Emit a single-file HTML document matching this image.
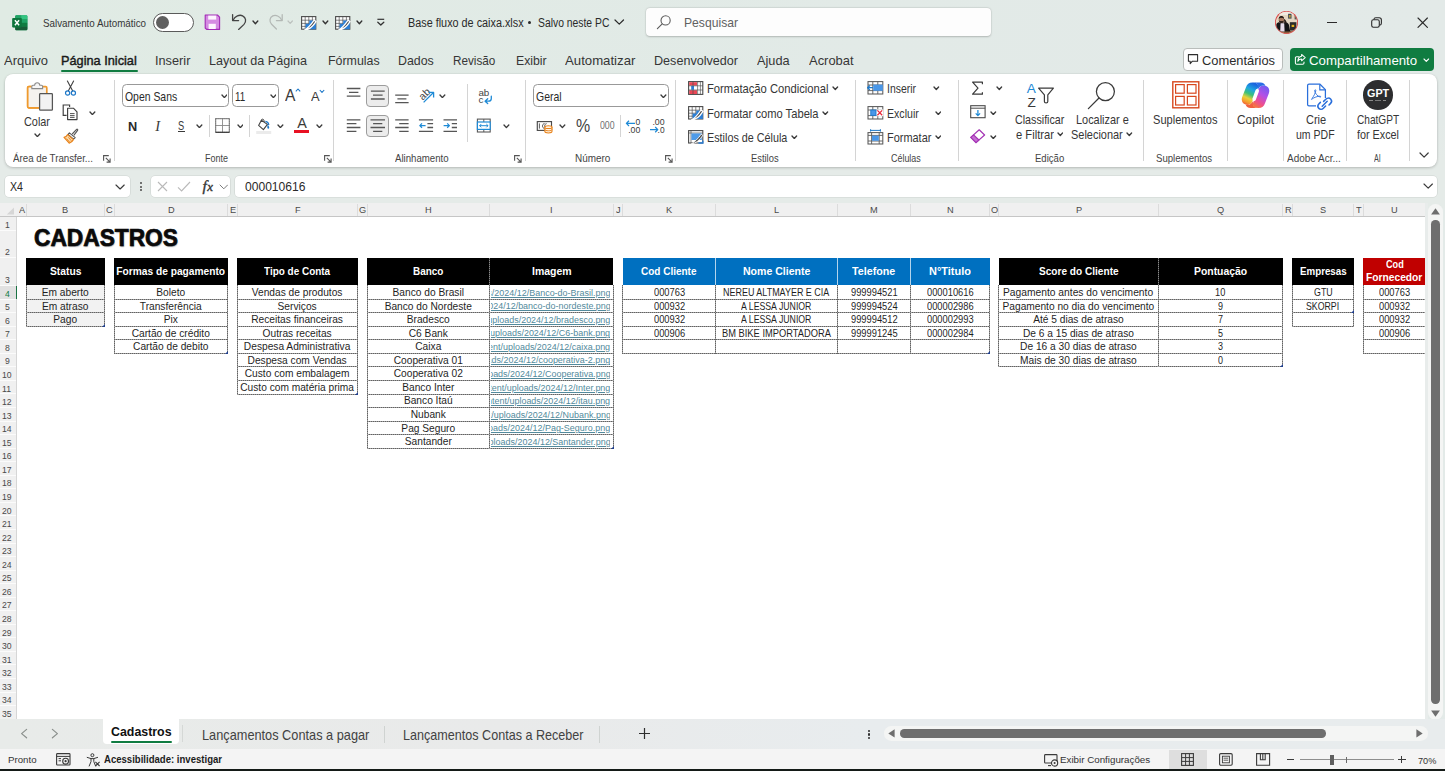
<!DOCTYPE html>
<html lang="pt-BR"><head><meta charset="utf-8"><title>Base fluxo de caixa.xlsx - Excel</title>
<style>
html,body{margin:0;padding:0;}
body{width:1445px;height:771px;overflow:hidden;position:relative;font-family:"Liberation Sans",sans-serif;
background:linear-gradient(90deg,#e0ebe4 0%,#e2eae7 60%,#e3eae8 100%);}
.t{position:absolute;white-space:nowrap;transform-origin:0 50%;display:block;}
.r{position:absolute;display:block;}
.lk{overflow:hidden;white-space:nowrap;direction:rtl;text-align:right;font-size:9.7px;line-height:12.4px;color:#528a9c;}
.lk span{direction:ltr;unicode-bidi:embed;text-decoration:underline;text-decoration-thickness:0.9px;text-underline-offset:1.2px;display:inline-block;transform:scaleX(0.925);transform-origin:100% 50%;}
</style></head><body>
<div class="r" style="left:0.00px;top:120.00px;width:1445.00px;height:90.00px;background:linear-gradient(180deg,rgba(229,235,232,0) 0%,rgba(229,235,232,1) 45%);"></div>
<svg class="r" style="left:11.60px;top:14.60px;" width="17" height="16" viewBox="0 0 17 16">
<rect x="3.2" y="0.2" width="12.2" height="15" rx="1.3" fill="#21a366"/>
<path d="M3.2 1.5 C3.2 0.8 3.8 0.2 4.5 0.2 H9.3 V4 H3.2 Z" fill="#21a366"/>
<path d="M9.3 0.2 H14.1 C14.8 0.2 15.4 0.8 15.4 1.5 V4 H9.3 Z" fill="#33c481"/>
<rect x="3.2" y="4" width="6.1" height="3.8" fill="#107c41"/>
<rect x="9.3" y="4" width="6.1" height="3.8" fill="#21a366"/>
<rect x="3.2" y="7.8" width="6.1" height="3.8" fill="#185c37"/>
<rect x="9.3" y="7.8" width="6.1" height="3.8" fill="#107c41"/>
<path d="M3.2 11.6 H15.4 V13.9 C15.4 14.6 14.8 15.2 14.1 15.2 H4.5 C3.8 15.2 3.2 14.6 3.2 13.9 Z" fill="#185c37"/>
<rect x="0.2" y="2.9" width="9.6" height="9.6" rx="1.2" fill="#107c41"/>
<rect x="0.2" y="2.9" width="9.6" height="9.6" rx="1.2" fill="#0b6a37" opacity="0.35"/>
<path d="M2.9 5.2 L7.1 10.2 M7.1 5.2 L2.9 10.2" stroke="#fff" stroke-width="1.45" fill="none"/>
</svg>
<span class="t" style="left:43.00px;top:18.19px;font-size:11.00px;line-height:11.00px;color:#363636;transform:scaleX(0.8913);">Salvamento Automático</span>
<div class="r" style="left:152.90px;top:12.80px;width:41.00px;height:18.90px;background:#fff;border:1.3px solid #5a5a5a;border-radius:10px;box-sizing:border-box;"></div>
<div class="r" style="left:156.20px;top:15.80px;width:13.20px;height:13.20px;background:#5f5f5f;border-radius:50%;"></div>
<svg class="r" style="left:204.40px;top:14.40px;" width="17" height="17" viewBox="0 0 17 17">
<path d="M1.2 1 H13.4 L15.6 3.2 V15.4 H2.6 L1.2 14 Z" fill="#d58be2" stroke="#a12bb5" stroke-width="1.1" stroke-linejoin="round"/>
<rect x="4.2" y="1.6" width="8" height="4" fill="#fdf4fe"/>
<rect x="4.6" y="9.8" width="7.2" height="5.2" fill="#fdf4fe"/>
</svg>
<svg class="r" style="left:230.60px;top:13.40px;" width="18" height="18" viewBox="0 0 18 18">
<path d="M1.6 1.6 V7.6 H7.6" fill="none" stroke="#444" stroke-width="1.3" stroke-linecap="round" stroke-linejoin="round"/>
<path d="M2 7.2 C4.2 3.2 8.4 1.2 11.6 2.8 C15 4.5 15.6 8.6 13 11.4 L7.6 16.4" fill="none" stroke="#444" stroke-width="1.3" stroke-linecap="round"/>
</svg>
<svg class="r" style="left:251.90px;top:20.05px;" width="6.8" height="4.7" viewBox="0 0 6.8 4.7"><path d="M1 1 L3.4 3.7 L5.8 1" fill="none" stroke="#333" stroke-width="1.35" stroke-linecap="round" stroke-linejoin="round"/></svg>
<svg class="r" style="left:267.00px;top:13.40px;" width="17" height="18" viewBox="0 0 17 18">
<path d="M15.2 1.6 V7.6 H9.4" fill="none" stroke="#b3b8b5" stroke-width="1.25" stroke-linecap="round" stroke-linejoin="round"/>
<path d="M14.8 7.2 C12.8 3.2 8.8 1.4 5.8 2.9 C2.6 4.5 2 8.6 4.6 11.2 L9.4 16" fill="none" stroke="#b3b8b5" stroke-width="1.25" stroke-linecap="round"/>
</svg>
<svg class="r" style="left:287.40px;top:20.20px;" width="6.4" height="4.4" viewBox="0 0 6.4 4.4"><path d="M1 1 L3.2 3.4 L5.4 1" fill="none" stroke="#bcc1be" stroke-width="1.2" stroke-linecap="round" stroke-linejoin="round"/></svg>
<svg class="r" style="left:300.60px;top:16.00px;" width="16" height="14.4" viewBox="0 0 16 14.4">
<rect x="0.6" y="0.6" width="14.2" height="12.6" fill="#fff" stroke="#4a4a4a" stroke-width="1.1"/>
<path d="M0.6 4.2 H14.8 M0.6 7.4 H14.8 M0.6 10.4 H14.8 M4.2 0.6 V13.2 M7.8 0.6 V13.2 M11.4 0.6 V13.2" stroke="#4a4a4a" stroke-width="0.8" fill="none" opacity="0.85"/>
<path d="M4.6 13.2 V7.8 H8.2 V4.6 H14.8 V13.2 Z" fill="#2b7fd6"/>
<path d="M3.4 14 C5.6 13.2 10.2 8.4 13.2 4.2 L15 5.6 C12.2 9.8 7.8 14 3.4 14Z" fill="#4a4a4a" stroke="#fff" stroke-width="1.3"/>
</svg>
<svg class="r" style="left:321.90px;top:20.05px;" width="6.8" height="4.7" viewBox="0 0 6.8 4.7"><path d="M1 1 L3.4 3.7 L5.8 1" fill="none" stroke="#333" stroke-width="1.35" stroke-linecap="round" stroke-linejoin="round"/></svg>
<svg class="r" style="left:335.20px;top:16.00px;" width="16" height="14.4" viewBox="0 0 16 14.4">
<rect x="0.6" y="0.6" width="14.2" height="12.6" fill="#fff" stroke="#4a4a4a" stroke-width="1.1"/>
<path d="M0.6 4.2 H14.8 M0.6 7.4 H14.8 M0.6 10.4 H14.8 M4.2 0.6 V13.2 M7.8 0.6 V13.2 M11.4 0.6 V13.2" stroke="#4a4a4a" stroke-width="0.8" fill="none" opacity="0.85"/>
<path d="M4.6 13.2 V7.8 H8.2 V4.6 H14.8 V13.2 Z" fill="#2b7fd6"/>
<path d="M3.4 14 C5.6 13.2 10.2 8.4 13.2 4.2 L15 5.6 C12.2 9.8 7.8 14 3.4 14Z" fill="#4a4a4a" stroke="#fff" stroke-width="1.3"/>
</svg>
<svg class="r" style="left:356.40px;top:20.05px;" width="6.8" height="4.7" viewBox="0 0 6.8 4.7"><path d="M1 1 L3.4 3.7 L5.8 1" fill="none" stroke="#333" stroke-width="1.35" stroke-linecap="round" stroke-linejoin="round"/></svg>
<svg class="r" style="left:375.60px;top:18.20px;" width="10" height="9" viewBox="0 0 10 9"><path d="M1.4 1.3 H8.2" stroke="#333" stroke-width="1.2" fill="none"/><path d="M1.8 4.2 L4.8 7 L7.8 4.2" stroke="#333" stroke-width="1.3" fill="none" stroke-linejoin="round" stroke-linecap="round"/></svg>
<span class="t" style="left:407.60px;top:17.34px;font-size:12.00px;line-height:12.00px;color:#2a2a2a;transform:scaleX(0.9027);">Base fluxo de caixa.xlsx</span>
<div class="r" style="left:528.40px;top:21.00px;width:3.00px;height:3.00px;background:#2a2a2a;border-radius:50%;"></div>
<span class="t" style="left:538.20px;top:17.34px;font-size:12.00px;line-height:12.00px;color:#2a2a2a;transform:scaleX(0.8633);">Salvo neste PC</span>
<svg class="r" style="left:614.25px;top:19.10px;" width="10.5" height="6.2" viewBox="0 0 10.5 6.2"><path d="M1 1 L5.25 5.2 L9.5 1" fill="none" stroke="#2a2a2a" stroke-width="1.2" stroke-linecap="round" stroke-linejoin="round"/></svg>
<div class="r" style="left:646.00px;top:8.00px;width:345.00px;height:28.00px;background:#fdfdfd;border-radius:4px;box-shadow:0 0.5px 2px rgba(0,0,0,0.20), 0 0 0 0.5px rgba(0,0,0,0.05);"></div>
<svg class="r" style="left:656.00px;top:14.00px;" width="16" height="16" viewBox="0 0 16 16"><circle cx="9.6" cy="6.4" r="4.6" fill="none" stroke="#5c5c5c" stroke-width="1.1"/><path d="M6.2 9.8 L1.4 14.6" stroke="#5c5c5c" stroke-width="1.15" stroke-linecap="round"/></svg>
<span class="t" style="left:684.00px;top:16.07px;font-size:13.50px;line-height:13.50px;color:#616161;transform:scaleX(0.8996);">Pesquisar</span>
<svg class="r" style="left:1274px;top:10px" width="26" height="26" viewBox="0 0 26 26">
<defs><clipPath id="av"><circle cx="12.5" cy="12.45" r="10.7"/></clipPath></defs>
<circle cx="12.5" cy="12.45" r="11.5" fill="#dc3a3a"/>
<g clip-path="url(#av)">
<rect x="0" y="0" width="26" height="26" fill="#e4d6c2"/>
<rect x="0" y="0" width="26" height="5" fill="#f1eadf"/>
<rect x="14.1" y="3.8" width="3.4" height="4.8" fill="#3d4852"/>
<rect x="14.9" y="5" width="1.8" height="2.6" fill="#b99a3a"/>
<rect x="20.6" y="5.4" width="2.6" height="4" fill="#5a5a52"/>
<rect x="15.8" y="12.2" width="6.6" height="8.4" fill="#2b2b29"/>
<rect x="17.6" y="14.8" width="2.6" height="2.2" fill="#e2b21e"/>
<rect x="0" y="21" width="26" height="5" fill="#8a5a3a"/>
<path d="M1.6 21.4 L2.4 14.2 C3 12.8 4.6 12.2 6 12.4 L10.4 12.4 C12.4 12.2 14 13 14.8 14.4 L16.2 21.4 Z" fill="#141416"/>
<path d="M6.6 13.2 L10.2 13.2 L10.6 21.4 L6.2 21.4 Z" fill="#e7dcea"/>
<path d="M9.8 9 C11 9 12.6 11 12.8 13.4 L10.6 13.6Z" fill="#2a1e1a"/>
<ellipse cx="7.4" cy="9.6" rx="2.7" ry="3.5" fill="#a87a60"/>
<path d="M4.7 9 C4.7 5 10.1 5 10.1 9 C9 7.4 5.8 7.4 4.7 9Z" fill="#17110f"/>
<path d="M4.8 10.2 C5.2 14 9.6 14 10 10.2 C9 11.4 5.8 11.4 4.8 10.2Z" fill="#33241e"/>
</g></svg>
<div class="r" style="left:1327.30px;top:21.70px;width:9.40px;height:1.15px;background:#2b2b2b;"></div>
<svg class="r" style="left:1371.40px;top:16.80px;" width="11.4" height="11.4" viewBox="0 0 11.4 11.4"><rect x="0.7" y="2.7" width="7.6" height="7.6" rx="1.7" fill="none" stroke="#2b2b2b" stroke-width="1.1"/><path d="M2.8 2.5 C3 1.3 3.7 0.7 4.8 0.7 H8.2 C9.6 0.7 10.4 1.5 10.4 2.9 V6.2 C10.4 7.3 9.8 8 8.6 8.2" fill="none" stroke="#2b2b2b" stroke-width="1.1"/></svg>
<svg class="r" style="left:1417.20px;top:17.00px;" width="12" height="12" viewBox="0 0 12 12"><path d="M1 1 L10.4 10.4 M10.4 1 L1 10.4" stroke="#2b2b2b" stroke-width="1.15" fill="none" stroke-linecap="round"/></svg>
<span class="t" style="left:4.00px;top:54.29px;font-size:13.60px;line-height:13.60px;color:#363636;transform:scaleX(0.9542);">Arquivo</span>
<span class="t" style="left:61.00px;top:54.29px;font-size:13.60px;line-height:13.60px;color:#1a1a1a;transform:scaleX(0.9370);-webkit-text-stroke:0.45px #1a1a1a;">Página Inicial</span>
<div class="r" style="left:60.60px;top:69.50px;width:77.00px;height:2.00px;background:#107c41;border-radius:1px;"></div>
<span class="t" style="left:154.60px;top:54.29px;font-size:13.60px;line-height:13.60px;color:#363636;transform:scaleX(0.9369);">Inserir</span>
<span class="t" style="left:209.20px;top:54.29px;font-size:13.60px;line-height:13.60px;color:#363636;transform:scaleX(0.9267);">Layout da Página</span>
<span class="t" style="left:327.60px;top:54.29px;font-size:13.60px;line-height:13.60px;color:#363636;transform:scaleX(0.9122);">Fórmulas</span>
<span class="t" style="left:398.00px;top:54.29px;font-size:13.60px;line-height:13.60px;color:#363636;transform:scaleX(0.9107);">Dados</span>
<span class="t" style="left:452.80px;top:54.29px;font-size:13.60px;line-height:13.60px;color:#363636;transform:scaleX(0.8630);">Revisão</span>
<span class="t" style="left:515.50px;top:54.29px;font-size:13.60px;line-height:13.60px;color:#363636;transform:scaleX(0.9028);">Exibir</span>
<span class="t" style="left:564.60px;top:54.29px;font-size:13.60px;line-height:13.60px;color:#363636;transform:scaleX(0.9703);">Automatizar</span>
<span class="t" style="left:654.40px;top:54.29px;font-size:13.60px;line-height:13.60px;color:#363636;transform:scaleX(0.9260);">Desenvolvedor</span>
<span class="t" style="left:757.40px;top:54.29px;font-size:13.60px;line-height:13.60px;color:#363636;transform:scaleX(0.9373);">Ajuda</span>
<span class="t" style="left:808.80px;top:54.29px;font-size:13.60px;line-height:13.60px;color:#363636;transform:scaleX(0.9516);">Acrobat</span>
<div class="r" style="left:1183.00px;top:48.00px;width:99.50px;height:23.00px;background:#fdfdfd;border:1px solid #b9bdbb;border-radius:4px;box-sizing:border-box;"></div>
<svg class="r" style="left:1186.60px;top:53.40px;" width="13" height="13" viewBox="0 0 13 13"><path d="M1.4 1.6 H10.6 V8.2 H5.4 L3.2 10.6 V8.2 H1.4 Z" fill="none" stroke="#2b2b2b" stroke-width="1.05" stroke-linejoin="round"/></svg>
<span class="t" style="left:1202.40px;top:54.29px;font-size:13.60px;line-height:13.60px;color:#2a2a2a;transform:scaleX(0.9469);">Comentários</span>
<div class="r" style="left:1289.80px;top:48.00px;width:144.50px;height:23.00px;background:#107c41;border-radius:4px;"></div>
<svg class="r" style="left:1294.00px;top:53.00px;" width="13" height="13" viewBox="0 0 13 13"><path d="M4.6 3.8 H2.6 C1.9 3.8 1.4 4.3 1.4 5 V10 C1.4 10.7 1.9 11.2 2.6 11.2 H8.8 C9.5 11.2 10 10.7 10 10 V9" fill="none" stroke="#fff" stroke-width="1.05" stroke-linecap="round"/><path d="M7.6 1.4 L11.2 4.6 L7.6 7.8 V6 C5.8 6 4.6 6.6 3.8 8.2 C4 5.4 5.4 3.6 7.6 3.3 Z" fill="none" stroke="#fff" stroke-width="1.05" stroke-linejoin="round"/></svg>
<span class="t" style="left:1309.40px;top:54.29px;font-size:13.60px;line-height:13.60px;color:#ffffff;transform:scaleX(0.9738);">Compartilhamento</span>
<svg class="r" style="left:1423.30px;top:58.10px;" width="6.6" height="4.4" viewBox="0 0 6.6 4.4"><path d="M1 1 L3.3 3.4 L5.6 1" fill="none" stroke="#fff" stroke-width="1.1" stroke-linecap="round" stroke-linejoin="round"/></svg>
<div class="r" style="left:4.60px;top:74.00px;width:1432.80px;height:93.00px;background:#ffffff;border-radius:8px;box-shadow:0 1px 3px rgba(0,0,0,0.20),0 0 0 0.5px rgba(0,0,0,0.04);"></div>
<svg class="r" style="left:26.00px;top:80.50px;" width="28" height="31" viewBox="0 0 28 31">
<path d="M5.6 5.6 H2.9 C2.2 5.6 1.7 6.1 1.7 6.8 V25.6 C1.7 26.3 2.2 26.8 2.9 26.8 H13.4" fill="#f6f1ea" stroke="#ef9a2e" stroke-width="1.7"/>
<path d="M2 6 H20.4 V12 H13.4 V26.6 H2Z" fill="#f5f2ee"/>
<path d="M5.6 5.6 H2.9 C2.2 5.6 1.7 6.1 1.7 6.8 V25.6 C1.7 26.3 2.2 26.8 2.9 26.8 H13.4 M16.6 5.6 H19.6 C20.3 5.6 20.8 6.1 20.8 6.8 V12.2" fill="none" stroke="#ef9a2e" stroke-width="1.7"/>
<path d="M5.8 7.6 V5.4 C5.8 4.7 6.3 4.2 7 4.2 H8.6 C8.8 2.7 9.9 1.8 11.2 1.8 C12.5 1.8 13.6 2.7 13.8 4.2 H15.4 C16.1 4.2 16.6 4.7 16.6 5.4 V7.6 Z" fill="#f6f6f6" stroke="#8a8a8a" stroke-width="1.1"/>
<rect x="13.6" y="12.6" width="12.8" height="16.6" rx="0.8" fill="#f3f3f3" stroke="#555" stroke-width="1.25"/>
</svg>
<span class="t" style="left:24.20px;top:115.80px;font-size:12.40px;line-height:12.40px;color:#363636;transform:scaleX(0.8775);">Colar</span>
<svg class="r" style="left:33.90px;top:132.90px;" width="6.8" height="4.6" viewBox="0 0 6.8 4.6"><path d="M1 1 L3.4 3.6 L5.8 1" fill="none" stroke="#3b3b3b" stroke-width="1.35" stroke-linecap="round" stroke-linejoin="round"/></svg>
<svg class="r" style="left:64.00px;top:80.00px;" width="13" height="17" viewBox="0 0 13 17">
<path d="M3.4 1 L8.6 10.8 M9.6 1 L4.4 10.8" stroke="#3f3f3f" stroke-width="1.1" fill="none" stroke-linecap="round"/>
<circle cx="3.6" cy="13" r="2.1" fill="none" stroke="#1e78c8" stroke-width="1.2"/>
<circle cx="9.4" cy="13" r="2.1" fill="none" stroke="#1e78c8" stroke-width="1.2"/>
</svg>
<svg class="r" style="left:62.20px;top:103.80px;" width="17" height="17" viewBox="0 0 17 17">
<path d="M4.6 11.4 H1.2 V1 H7.6 V3" fill="none" stroke="#3f3f3f" stroke-width="1.15"/>
<path d="M5.6 4.2 H11.4 L15 7.8 V15.6 H5.6 Z" fill="#fff" stroke="#3f3f3f" stroke-width="1.15" stroke-linejoin="round"/>
<path d="M8 9.6 H12.6 M8 11.6 H12.6 M8 13.4 H12.6" stroke="#3f3f3f" stroke-width="0.9" fill="none"/>
</svg>
<svg class="r" style="left:88.90px;top:110.50px;" width="6.8" height="4.6" viewBox="0 0 6.8 4.6"><path d="M1 1 L3.4 3.6 L5.8 1" fill="none" stroke="#3b3b3b" stroke-width="1.35" stroke-linecap="round" stroke-linejoin="round"/></svg>
<svg class="r" style="left:62.50px;top:128.00px;" width="16" height="16" viewBox="0 0 16 16">
<path d="M9.2 6 L13.6 1.4 C14.2 0.8 15.2 1.6 14.6 2.4 L10.8 7.4" fill="#fff" stroke="#555" stroke-width="1.1"/>
<path d="M6.4 4.8 L12.2 9.6 L10.6 11.2 L5 6.4 Z" fill="#fff" stroke="#555" stroke-width="1.05" stroke-linejoin="round"/>
<path d="M4.6 6.6 L10.4 11.6 C9.4 13.4 8 14.6 6.2 15.2 L1 9.4 C2.6 9 3.8 8 4.6 6.6 Z" fill="#fbd9a8" stroke="#e8831c" stroke-width="1.15" stroke-linejoin="round"/>
<path d="M3.6 10.6 L6.6 14 M5.4 9.4 L8.4 12.8" stroke="#e8831c" stroke-width="0.9" fill="none"/>
</svg>
<span class="t" style="left:13.00px;top:153.13px;font-size:10.60px;line-height:10.60px;color:#444444;transform:scaleX(0.9175);">Área de Transfer...</span>
<svg class="r" style="left:103.30px;top:154.60px;" width="9" height="9" viewBox="0 0 9 9"><path d="M0.6 5.8 V0.6 H5.8" fill="none" stroke="#555" stroke-width="1.1"/><path d="M2.8 2.8 L6.8 6.8 M7.1 3.6 V7.1 H3.6" fill="none" stroke="#555" stroke-width="1.1"/></svg>
<div class="r" style="left:113.80px;top:80.00px;width:1.00px;height:81.00px;background:#d4d4d4;"></div>
<div class="r" style="left:122.30px;top:84.10px;width:107.20px;height:22.70px;background:#fff;border:1px solid #999;border-radius:4.5px;box-sizing:border-box;"></div>
<span class="t" style="left:124.80px;top:90.97px;font-size:12.20px;line-height:12.20px;color:#2a2a2a;transform:scaleX(0.8552);">Open Sans</span>
<svg class="r" style="left:220.60px;top:93.90px;" width="6.8" height="4.6" viewBox="0 0 6.8 4.6"><path d="M1 1 L3.4 3.6 L5.8 1" fill="none" stroke="#3b3b3b" stroke-width="1.35" stroke-linecap="round" stroke-linejoin="round"/></svg>
<div class="r" style="left:231.70px;top:84.10px;width:47.20px;height:22.70px;background:#fff;border:1px solid #999;border-radius:4.5px;box-sizing:border-box;"></div>
<span class="t" style="left:234.60px;top:90.97px;font-size:12.20px;line-height:12.20px;color:#2a2a2a;transform:scaleX(0.8055);">11</span>
<svg class="r" style="left:269.60px;top:93.90px;" width="6.8" height="4.6" viewBox="0 0 6.8 4.6"><path d="M1 1 L3.4 3.6 L5.8 1" fill="none" stroke="#3b3b3b" stroke-width="1.35" stroke-linecap="round" stroke-linejoin="round"/></svg>
<span class="t" style="left:285.40px;top:86.82px;font-size:16.40px;line-height:16.40px;color:#3a3a3a;transform:scaleX(0.9507);">A</span>
<svg class="r" style="left:295.20px;top:87.60px;" width="6" height="4.4" viewBox="0 0 6 4.4"><path d="M0.8 3.4 L3 1 L5.2 3.4" fill="none" stroke="#1e78c8" stroke-width="1.1" stroke-linejoin="round"/></svg>
<span class="t" style="left:310.80px;top:89.53px;font-size:13.20px;line-height:13.20px;color:#3a3a3a;transform:scaleX(0.9767);">A</span>
<svg class="r" style="left:318.60px;top:88.60px;" width="6" height="4.4" viewBox="0 0 6 4.4"><path d="M0.8 1 L3 3.4 L5.2 1" fill="none" stroke="#1e78c8" stroke-width="1.1" stroke-linejoin="round"/></svg>
<span class="t" style="left:128.40px;top:120.09px;font-size:13.60px;line-height:13.60px;color:#2a2a2a;font-weight:700;transform:scaleX(0.9367);">N</span>
<span class="t" style="left:155.20px;top:119.03px;font-size:14.50px;line-height:14.50px;color:#3a3a3a;font-style:italic;font-family:'Liberation Serif',serif;">I</span>
<span class="t" style="left:178.40px;top:119.66px;font-size:12.80px;line-height:12.80px;color:#3a3a3a;transform:scaleX(0.7262);">S</span>
<div class="r" style="left:177.60px;top:130.90px;width:7.80px;height:1.10px;background:#3a3a3a;"></div>
<svg class="r" style="left:195.90px;top:123.90px;" width="6.8" height="4.6" viewBox="0 0 6.8 4.6"><path d="M1 1 L3.4 3.6 L5.8 1" fill="none" stroke="#3b3b3b" stroke-width="1.35" stroke-linecap="round" stroke-linejoin="round"/></svg>
<div class="r" style="left:208.80px;top:115.00px;width:1.00px;height:22.00px;background:#d4d4d4;"></div>
<svg class="r" style="left:215.00px;top:118.00px;" width="15" height="15" viewBox="0 0 15 15">
<rect x="0.6" y="0.6" width="13.8" height="13.8" fill="none" stroke="#8a8a8a" stroke-width="0.9" stroke-dasharray="1.1 0.9"/>
<path d="M7.5 0.4 V14.6 M0.4 7.5 H14.6" stroke="#8a8a8a" stroke-width="0.9" fill="none"/>
<path d="M0.4 14.3 H14.6" stroke="#3a3a3a" stroke-width="1.3"/>
<path d="M0.7 0.4 V14.6 M14.3 0.4 V14.6 M0.4 0.7 H14.6" stroke="#6f6f6f" stroke-width="0.9" fill="none"/>
</svg>
<svg class="r" style="left:236.70px;top:123.90px;" width="6.8" height="4.6" viewBox="0 0 6.8 4.6"><path d="M1 1 L3.4 3.6 L5.8 1" fill="none" stroke="#3b3b3b" stroke-width="1.35" stroke-linecap="round" stroke-linejoin="round"/></svg>
<div class="r" style="left:249.30px;top:115.00px;width:1.00px;height:22.00px;background:#d4d4d4;"></div>
<svg class="r" style="left:256.00px;top:117.50px;" width="16" height="17" viewBox="0 0 16 17">
<path d="M5.4 2.2 L2.6 7.4 L7.4 11.6 L11.4 6.4 Z" fill="#fff" stroke="#444" stroke-width="1.1" stroke-linejoin="round"/>
<path d="M5.2 2.4 C5.6 0.6 7.8 0.8 8 2.6 L8.2 4" fill="none" stroke="#444" stroke-width="1.0"/>
<path d="M11.6 6.4 C12.8 8 13.4 9 13.2 10 C13 11 11.6 11 11.4 10 C11.2 9 11.4 8 11.6 6.4Z" fill="#1e78c8"/>
<path d="M9.4 3.4 C11.4 3.6 12.6 4.8 12.8 7" fill="none" stroke="#1e78c8" stroke-width="1.2"/>
<rect x="0.2" y="13" width="15" height="3" fill="#ebebeb"/>
</svg>
<svg class="r" style="left:277.20px;top:123.90px;" width="6.8" height="4.6" viewBox="0 0 6.8 4.6"><path d="M1 1 L3.4 3.6 L5.8 1" fill="none" stroke="#3b3b3b" stroke-width="1.35" stroke-linecap="round" stroke-linejoin="round"/></svg>
<span class="t" style="left:297.20px;top:116.11px;font-size:14.40px;line-height:14.40px;color:#3a3a3a;">A</span>
<div class="r" style="left:294.00px;top:130.20px;width:14.80px;height:3.00px;background:#e81123;"></div>
<svg class="r" style="left:316.00px;top:123.90px;" width="6.8" height="4.6" viewBox="0 0 6.8 4.6"><path d="M1 1 L3.4 3.6 L5.8 1" fill="none" stroke="#3b3b3b" stroke-width="1.35" stroke-linecap="round" stroke-linejoin="round"/></svg>
<span class="t" style="left:204.80px;top:153.13px;font-size:10.60px;line-height:10.60px;color:#444444;transform:scaleX(0.8486);">Fonte</span>
<svg class="r" style="left:323.70px;top:154.60px;" width="9" height="9" viewBox="0 0 9 9"><path d="M0.6 5.8 V0.6 H5.8" fill="none" stroke="#555" stroke-width="1.1"/><path d="M2.8 2.8 L6.8 6.8 M7.1 3.6 V7.1 H3.6" fill="none" stroke="#555" stroke-width="1.1"/></svg>
<div class="r" style="left:333.40px;top:80.00px;width:1.00px;height:81.00px;background:#d4d4d4;"></div>
<div class="r" style="left:366.30px;top:84.60px;width:22.60px;height:22.10px;background:#ececec;border:1px solid #9c9c9c;border-radius:4px;box-sizing:border-box;"></div>
<div class="r" style="left:366.30px;top:114.80px;width:22.60px;height:22.10px;background:#ececec;border:1px solid #9c9c9c;border-radius:4px;box-sizing:border-box;"></div>
<svg class="r" style="left:340px;top:78px" width="190" height="67" viewBox="340 78 190 67"><path d="M346.8 88.5 H360.4 M349 92.4 H358.4 M346.8 96.2 H360.4 M370.9 91.1 H384.7 M373 95.1 H382.6 M370.9 99 H384.7 M395.2 95.1 H408.6 M397.4 98.9 H406.4 M395.2 102.7 H408.6 M346.8 119.8 H360.4 M346.8 123.6 H356.4 M346.8 127.5 H360.4 M346.8 131.3 H356.4 M370.5 119.8 H385 M373.1 123.6 H382.3 M370.5 127.5 H385 M373.1 131.3 H382.3 M395.2 119.8 H408.6 M399.2 123.6 H408.6 M395.2 127.5 H408.6 M399.2 131.3 H408.6 M418.9 119.8 H433.1 M427.4 123.6 H433.1 M427.4 127.5 H433.1 M418.9 131.3 H433.1 M443.5 119.8 H457 M451.8 123.6 H457 M451.8 127.5 H457 M443.5 131.3 H457 " stroke="#565656" stroke-width="1.3" fill="none"/><path d="M425.6 125.6 H419.8 M422 123.4 L419.8 125.6 L422 127.8 M443.6 125.6 H449.4 M447.2 123.4 L449.4 125.6 L447.2 127.8" stroke="#1e8ad6" stroke-width="1.25" fill="none" stroke-linejoin="round"/><text transform="translate(424.2 94.2) rotate(-45)" x="-5.6" y="3.6" font-family="Liberation Sans" font-size="10.4" fill="#444">ab</text><path d="M423.6 102.4 L433.2 92.8 M428.4 92.4 H433.6 V97.6" fill="none" stroke="#1e8ad6" stroke-width="1.3" stroke-linejoin="round"/><text x="478.4" y="95.9" font-family="Liberation Sans" font-size="9.8" fill="#444">ab</text><text x="478.6" y="103.1" font-family="Liberation Sans" font-size="9.8" fill="#444">c</text><path d="M491.3 96.2 V98.4 C491.3 100.4 490.3 101.2 488.6 101.2 H485.2 M487.7 98.8 L485.1 101.2 L487.7 103.6" fill="none" stroke="#1e8ad6" stroke-width="1.3" stroke-linejoin="round" stroke-linecap="round"/><rect x="477.4" y="119.1" width="12.8" height="12.9" fill="#fff" stroke="#5a5a5a" stroke-width="1.1"/><path d="M483.8 119.1 V122 M483.8 129.2 V132" stroke="#5a5a5a" stroke-width="1"/><rect x="477.4" y="122" width="12.8" height="7.4" fill="#fff" stroke="#1e8ad6" stroke-width="1.2"/><path d="M479.6 125.7 H488 M481.2 124.1 L479.6 125.7 L481.2 127.3 M486.4 124.1 L488 125.7 L486.4 127.3" stroke="#1e8ad6" stroke-width="1" fill="none"/></svg>
<svg class="r" style="left:438.80px;top:93.90px;" width="6.8" height="4.6" viewBox="0 0 6.8 4.6"><path d="M1 1 L3.4 3.6 L5.8 1" fill="none" stroke="#3b3b3b" stroke-width="1.35" stroke-linecap="round" stroke-linejoin="round"/></svg>
<div class="r" style="left:466.80px;top:84.00px;width:1.00px;height:58.40px;background:#d4d4d4;"></div>
<svg class="r" style="left:502.90px;top:124.10px;" width="6.8" height="4.6" viewBox="0 0 6.8 4.6"><path d="M1 1 L3.4 3.6 L5.8 1" fill="none" stroke="#3b3b3b" stroke-width="1.35" stroke-linecap="round" stroke-linejoin="round"/></svg>
<span class="t" style="left:394.80px;top:153.13px;font-size:10.60px;line-height:10.60px;color:#444444;transform:scaleX(0.9097);">Alinhamento</span>
<svg class="r" style="left:514.10px;top:154.60px;" width="9" height="9" viewBox="0 0 9 9"><path d="M0.6 5.8 V0.6 H5.8" fill="none" stroke="#555" stroke-width="1.1"/><path d="M2.8 2.8 L6.8 6.8 M7.1 3.6 V7.1 H3.6" fill="none" stroke="#555" stroke-width="1.1"/></svg>
<div class="r" style="left:524.90px;top:80.00px;width:1.00px;height:81.00px;background:#d4d4d4;"></div>
<div class="r" style="left:533.20px;top:84.10px;width:135.40px;height:22.70px;background:#fff;border:1px solid #999;border-radius:4.5px;box-sizing:border-box;"></div>
<span class="t" style="left:535.80px;top:90.97px;font-size:12.20px;line-height:12.20px;color:#2a2a2a;transform:scaleX(0.8582);">Geral</span>
<svg class="r" style="left:659.90px;top:93.90px;" width="6.8" height="4.6" viewBox="0 0 6.8 4.6"><path d="M1 1 L3.4 3.6 L5.8 1" fill="none" stroke="#3b3b3b" stroke-width="1.35" stroke-linecap="round" stroke-linejoin="round"/></svg>
<svg class="r" style="left:530px;top:114px" width="145" height="26" viewBox="530 114 145 26"><rect x="537.3" y="121.6" width="14.2" height="8.8" fill="#fff" stroke="#4a4a4a" stroke-width="1.15"/><path d="M539.4 123.4 V128.6" stroke="#4a4a4a" stroke-width="0.9"/><path d="M544.6 123.6 C541.8 123.6 541.8 128.4 544.6 128.4 M546.6 123.6 C544 124 544 128 546.6 128.4" stroke="#4a4a4a" stroke-width="0.9" fill="none"/><path d="M544.8 127.2 V131.6 C544.8 133.4 552 133.4 552 131.6 V127.2" fill="#fff3e4" stroke="#e8831c" stroke-width="1.05"/><ellipse cx="548.4" cy="127.2" rx="3.6" ry="1.4" fill="#fff3e4" stroke="#e8831c" stroke-width="1.05"/><path d="M544.8 129.5 C544.8 131.2 552 131.2 552 129.5" fill="none" stroke="#e8831c" stroke-width="1"/><path d="M635 123.4 H626.4 M629 120.8 L626.4 123.4 L629 126" stroke="#1e8ad6" stroke-width="1.25" fill="none" stroke-linejoin="round"/><text x="635.4" y="125.1" font-family="Liberation Sans" font-size="8.6" fill="#3a3a3a">0</text><text x="628.2" y="132.7" font-family="Liberation Sans" font-size="8.6" fill="#3a3a3a" textLength="12.2" lengthAdjust="spacingAndGlyphs">.00</text><text x="652.4" y="124.9" font-family="Liberation Sans" font-size="8.6" fill="#3a3a3a" textLength="12.2" lengthAdjust="spacingAndGlyphs">.00</text><path d="M650 129.6 H657.8 M655.2 127 L657.8 129.6 L655.2 132.2" stroke="#1e8ad6" stroke-width="1.25" fill="none" stroke-linejoin="round"/><text x="657.6" y="132.7" font-family="Liberation Sans" font-size="8.6" fill="#3a3a3a" textLength="7" lengthAdjust="spacingAndGlyphs">.0</text></svg>
<svg class="r" style="left:559.00px;top:124.10px;" width="6.8" height="4.6" viewBox="0 0 6.8 4.6"><path d="M1 1 L3.4 3.6 L5.8 1" fill="none" stroke="#3b3b3b" stroke-width="1.35" stroke-linecap="round" stroke-linejoin="round"/></svg>
<span class="t" style="left:576.00px;top:117.39px;font-size:18.20px;line-height:18.20px;color:#444;transform:scaleX(0.8774);">%</span>
<span class="t" style="left:599.80px;top:120.60px;font-size:10.40px;line-height:10.40px;color:#707070;transform:scaleX(0.8415);">000</span>
<div class="r" style="left:619.70px;top:115.00px;width:1.00px;height:22.00px;background:#d4d4d4;"></div>
<span class="t" style="left:575.00px;top:153.13px;font-size:10.60px;line-height:10.60px;color:#444444;transform:scaleX(0.9390);">Número</span>
<svg class="r" style="left:664.70px;top:154.60px;" width="9" height="9" viewBox="0 0 9 9"><path d="M0.6 5.8 V0.6 H5.8" fill="none" stroke="#555" stroke-width="1.1"/><path d="M2.8 2.8 L6.8 6.8 M7.1 3.6 V7.1 H3.6" fill="none" stroke="#555" stroke-width="1.1"/></svg>
<div class="r" style="left:674.70px;top:80.00px;width:1.00px;height:81.00px;background:#d4d4d4;"></div>
<svg class="r" style="left:687.60px;top:81.40px;" width="16" height="14.4" viewBox="0 0 16 14.4">
<rect x="0.6" y="0.6" width="14.2" height="12.8" fill="#fff" stroke="#4a4a4a" stroke-width="1.1"/>
<rect x="1.2" y="1.2" width="7.8" height="3.4" fill="#ea4755"/>
<rect x="3.2" y="5" width="2.8" height="3.8" fill="#2b7fd6"/>
<rect x="1.2" y="9.2" width="7.8" height="3.8" fill="#ea4755"/>
<path d="M0.6 4.8 H14.8 M0.6 9 H14.8 M5 0.6 V4.8 M5 9 V13.4 M9.6 0.6 V13.4 M12.4 0.6 V13.4" stroke="#4a4a4a" stroke-width="0.8" fill="none" opacity="0.8"/>
</svg>
<span class="t" style="left:706.80px;top:83.20px;font-size:12.40px;line-height:12.40px;color:#363636;transform:scaleX(0.9048);">Formatação Condicional</span>
<svg class="r" style="left:832.20px;top:86.15px;" width="6.6" height="4.5" viewBox="0 0 6.6 4.5"><path d="M1 1 L3.3 3.5 L5.6 1" fill="none" stroke="#3b3b3b" stroke-width="1.35" stroke-linecap="round" stroke-linejoin="round"/></svg>
<svg class="r" style="left:687.60px;top:105.80px;" width="16" height="15" viewBox="0 0 16 15">
<rect x="0.6" y="0.6" width="14.2" height="12.4" fill="#fff" stroke="#4a4a4a" stroke-width="1.1"/>
<path d="M0.6 4.2 H14.8 M0.6 7.2 H14.8 M0.6 10.2 H14.8 M4.2 0.6 V13 M7.8 0.6 V13 M11.4 0.6 V13" stroke="#4a4a4a" stroke-width="0.8" fill="none" opacity="0.85"/>
<path d="M4.6 13 V7.6 H8.2 V4.6 H14.8 V13 Z" fill="#2b7fd6"/>
<path d="M3.2 14 C5.4 13.2 10 8.4 13 4 L15 5.4 C12.2 9.8 7.6 14 3.2 14Z" fill="#4a4a4a" stroke="#fff" stroke-width="1.3"/>
</svg>
<span class="t" style="left:706.80px;top:107.60px;font-size:12.40px;line-height:12.40px;color:#363636;transform:scaleX(0.9014);">Formatar como Tabela</span>
<svg class="r" style="left:822.20px;top:110.55px;" width="6.6" height="4.5" viewBox="0 0 6.6 4.5"><path d="M1 1 L3.3 3.5 L5.6 1" fill="none" stroke="#3b3b3b" stroke-width="1.35" stroke-linecap="round" stroke-linejoin="round"/></svg>
<svg class="r" style="left:687.60px;top:130.20px;" width="16" height="15" viewBox="0 0 16 15">
<rect x="0.6" y="0.6" width="14.2" height="12.4" fill="#fff" stroke="#4a4a4a" stroke-width="1.1"/>
<path d="M0.6 3 H14.8 M3 0.6 V13" stroke="#4a4a4a" stroke-width="0.8" fill="none" opacity="0.85"/>
<rect x="3.4" y="3.4" width="10.4" height="6.6" fill="#4f9be8"/>
<path d="M3.4 13.8 C5.6 13 10.2 8.4 13.2 4.2 L14.8 5.4 C12 9.6 7.6 13.8 3.4 13.8Z" fill="#4a4a4a" stroke="#fff" stroke-width="0.9"/>
<path d="M14.8 10.4 V13 H10.4" fill="none" stroke="#2b7fd6" stroke-width="1.4"/>
</svg>
<span class="t" style="left:706.80px;top:132.00px;font-size:12.40px;line-height:12.40px;color:#363636;transform:scaleX(0.8706);">Estilos de Célula</span>
<svg class="r" style="left:791.10px;top:134.95px;" width="6.6" height="4.5" viewBox="0 0 6.6 4.5"><path d="M1 1 L3.3 3.5 L5.6 1" fill="none" stroke="#3b3b3b" stroke-width="1.35" stroke-linecap="round" stroke-linejoin="round"/></svg>
<span class="t" style="left:751.40px;top:153.13px;font-size:10.60px;line-height:10.60px;color:#444444;transform:scaleX(0.8840);">Estilos</span>
<div class="r" style="left:855.10px;top:80.00px;width:1.00px;height:81.00px;background:#d4d4d4;"></div>
<svg class="r" style="left:866.60px;top:81.40px;" width="17" height="14" viewBox="0 0 17 14">
<rect x="1" y="0.6" width="14.8" height="12.4" fill="#fff" stroke="#5a5a5a" stroke-width="1.05"/>
<path d="M1 4 H15.8 M1 9.6 H15.8 M5.8 0.6 V13 M10.8 0.6 V13" stroke="#5a5a5a" stroke-width="0.9" fill="none"/>
<rect x="6.2" y="3.6" width="9.6" height="6.2" fill="#4a97e8"/>
<path d="M0.6 6.7 H6 M2.8 4.5 L0.6 6.7 L2.8 8.9" stroke="#1e78c8" stroke-width="1.25" fill="none" stroke-linejoin="round"/>
</svg>
<span class="t" style="left:886.80px;top:83.20px;font-size:12.40px;line-height:12.40px;color:#363636;transform:scaleX(0.8418);">Inserir</span>
<svg class="r" style="left:933.30px;top:86.15px;" width="6.6" height="4.5" viewBox="0 0 6.6 4.5"><path d="M1 1 L3.3 3.5 L5.6 1" fill="none" stroke="#3b3b3b" stroke-width="1.35" stroke-linecap="round" stroke-linejoin="round"/></svg>
<svg class="r" style="left:866.60px;top:105.80px;" width="17" height="14" viewBox="0 0 17 14">
<rect x="1" y="0.6" width="14.8" height="12.4" fill="#fff" stroke="#5a5a5a" stroke-width="1.05"/>
<path d="M1 4 H15.8 M1 9.6 H15.8 M5.8 0.6 V13 M10.8 0.6 V13" stroke="#5a5a5a" stroke-width="0.9" fill="none"/>
<rect x="9.4" y="3.4" width="7" height="6.8" fill="#fff"/>
<rect x="3.8" y="4" width="5.2" height="5.4" fill="#4a97e8" stroke="#1e78c8" stroke-width="0.9"/>
<path d="M10.4 4.4 L15.2 9.2 M15.2 4.4 L10.4 9.2" stroke="#e8283a" stroke-width="1.25" fill="none"/>
</svg>
<span class="t" style="left:886.80px;top:107.60px;font-size:12.40px;line-height:12.40px;color:#363636;transform:scaleX(0.8547);">Excluir</span>
<svg class="r" style="left:934.70px;top:110.55px;" width="6.6" height="4.5" viewBox="0 0 6.6 4.5"><path d="M1 1 L3.3 3.5 L5.6 1" fill="none" stroke="#3b3b3b" stroke-width="1.35" stroke-linecap="round" stroke-linejoin="round"/></svg>
<svg class="r" style="left:866.60px;top:128.80px;" width="17" height="16" viewBox="0 0 17 16">
<path d="M3.6 1.4 H13.4 M3.6 0.2 V2.6 M13.4 0.2 V2.6" stroke="#1e78c8" stroke-width="1" fill="none"/>
<rect x="1" y="3.6" width="14.8" height="11.4" fill="#fff" stroke="#5a5a5a" stroke-width="1.05"/>
<path d="M1 6.4 H15.8 M1 12 H15.8 M4.6 3.6 V15 M12.2 3.6 V15" stroke="#5a5a5a" stroke-width="0.9" fill="none"/>
<rect x="5" y="6.6" width="6.8" height="5.2" fill="#4a97e8"/>
</svg>
<span class="t" style="left:886.80px;top:132.00px;font-size:12.40px;line-height:12.40px;color:#363636;transform:scaleX(0.8828);">Formatar</span>
<svg class="r" style="left:934.50px;top:134.95px;" width="6.6" height="4.5" viewBox="0 0 6.6 4.5"><path d="M1 1 L3.3 3.5 L5.6 1" fill="none" stroke="#3b3b3b" stroke-width="1.35" stroke-linecap="round" stroke-linejoin="round"/></svg>
<span class="t" style="left:891.20px;top:153.13px;font-size:10.60px;line-height:10.60px;color:#444444;transform:scaleX(0.8430);">Células</span>
<div class="r" style="left:957.70px;top:80.00px;width:1.00px;height:81.00px;background:#d4d4d4;"></div>
<svg class="r" style="left:970.80px;top:80.80px;" width="13" height="15" viewBox="0 0 13 15"><path d="M11.4 3.2 V1.2 H1.6 L7 7.2 L1.6 13.2 H11.4 V11.2" fill="none" stroke="#3a3a3a" stroke-width="1.2" stroke-linejoin="round"/></svg>
<svg class="r" style="left:996.10px;top:86.15px;" width="6.6" height="4.5" viewBox="0 0 6.6 4.5"><path d="M1 1 L3.3 3.5 L5.6 1" fill="none" stroke="#3b3b3b" stroke-width="1.35" stroke-linecap="round" stroke-linejoin="round"/></svg>
<svg class="r" style="left:969.60px;top:105.40px;" width="16.5" height="14" viewBox="0 0 16.5 14">
<rect x="0.7" y="0.7" width="14.4" height="12" fill="#fff" stroke="#4a4a4a" stroke-width="1.1"/>
<path d="M0.7 3.2 H15.1" stroke="#4a4a4a" stroke-width="1"/>
<path d="M7.9 5 V10.6 M5.7 8.4 L7.9 10.6 L10.1 8.4" stroke="#1e8ad6" stroke-width="1.25" fill="none" stroke-linejoin="round"/>
</svg>
<svg class="r" style="left:990.10px;top:110.55px;" width="6.6" height="4.5" viewBox="0 0 6.6 4.5"><path d="M1 1 L3.3 3.5 L5.6 1" fill="none" stroke="#3b3b3b" stroke-width="1.35" stroke-linecap="round" stroke-linejoin="round"/></svg>
<svg class="r" style="left:969.80px;top:129.40px;" width="16" height="15" viewBox="0 0 16 15">
<path d="M9.2 0.8 L14.6 6 L6 13.6 L0.8 8.4 Z" fill="#fff" stroke="#a434b4" stroke-width="1.2" stroke-linejoin="round"/>
<path d="M3.6 5.8 L8.9 11 L6 13.6 L0.8 8.4 Z" fill="#c46cd2" stroke="#a434b4" stroke-width="1.1" stroke-linejoin="round"/>
</svg>
<svg class="r" style="left:990.10px;top:134.95px;" width="6.6" height="4.5" viewBox="0 0 6.6 4.5"><path d="M1 1 L3.3 3.5 L5.6 1" fill="none" stroke="#3b3b3b" stroke-width="1.35" stroke-linecap="round" stroke-linejoin="round"/></svg>
<svg class="r" style="left:1025.50px;top:81.50px;" width="30" height="28" viewBox="0 0 30 28">
<text x="0.8" y="11.4" font-family="Liberation Sans" font-size="13.6" fill="#1e8ad6">A</text>
<text x="1.4" y="24.9" font-family="Liberation Sans" font-size="13.6" fill="#3a3a3a">Z</text>
<path d="M12.6 6.2 H27.4 L21.8 12.8 V19.4 C21.8 21.4 18.4 21.4 18.4 19.4 V12.8 Z" fill="#fff" stroke="#3a3a3a" stroke-width="1.2" stroke-linejoin="round"/>
</svg>
<span class="t" style="left:1015.40px;top:114.40px;font-size:12.40px;line-height:12.40px;color:#363636;transform:scaleX(0.8639);">Classificar</span>
<span class="t" style="left:1016.00px;top:129.00px;font-size:12.40px;line-height:12.40px;color:#363636;transform:scaleX(0.9043);">e Filtrar</span>
<svg class="r" style="left:1056.90px;top:132.15px;" width="6.6" height="4.5" viewBox="0 0 6.6 4.5"><path d="M1 1 L3.3 3.5 L5.6 1" fill="none" stroke="#3b3b3b" stroke-width="1.35" stroke-linecap="round" stroke-linejoin="round"/></svg>
<svg class="r" style="left:1087.00px;top:81.00px;" width="30" height="30" viewBox="0 0 30 30"><circle cx="18.4" cy="10.6" r="9" fill="none" stroke="#3a3a3a" stroke-width="1.25"/><path d="M12 17 L1.4 27.6" stroke="#3a3a3a" stroke-width="1.3" stroke-linecap="round"/></svg>
<span class="t" style="left:1076.00px;top:114.40px;font-size:12.40px;line-height:12.40px;color:#363636;transform:scaleX(0.8806);">Localizar e</span>
<span class="t" style="left:1071.40px;top:129.00px;font-size:12.40px;line-height:12.40px;color:#363636;transform:scaleX(0.8841);">Selecionar</span>
<svg class="r" style="left:1126.10px;top:132.15px;" width="6.6" height="4.5" viewBox="0 0 6.6 4.5"><path d="M1 1 L3.3 3.5 L5.6 1" fill="none" stroke="#3b3b3b" stroke-width="1.35" stroke-linecap="round" stroke-linejoin="round"/></svg>
<span class="t" style="left:1035.40px;top:153.13px;font-size:10.60px;line-height:10.60px;color:#444444;transform:scaleX(0.9010);">Edição</span>
<div class="r" style="left:1142.50px;top:80.00px;width:1.00px;height:81.00px;background:#d4d4d4;"></div>
<svg class="r" style="left:1171.50px;top:80.90px;" width="28" height="28" viewBox="0 0 28 28">
<rect x="0.8" y="0.8" width="26" height="26" fill="#fff" stroke="#d8481e" stroke-width="1.4"/>
<rect x="3.6" y="3.6" width="8.6" height="8.6" fill="none" stroke="#d8481e" stroke-width="1.2"/>
<rect x="15.4" y="3.6" width="8.6" height="8.6" fill="none" stroke="#d8481e" stroke-width="1.2"/>
<rect x="3.6" y="15.4" width="8.6" height="8.6" fill="none" stroke="#d8481e" stroke-width="1.2"/>
<rect x="15.4" y="15.4" width="8.6" height="8.6" fill="none" stroke="#d8481e" stroke-width="1.2"/>
</svg>
<span class="t" style="left:1153.40px;top:114.40px;font-size:12.40px;line-height:12.40px;color:#363636;transform:scaleX(0.8926);">Suplementos</span>
<span class="t" style="left:1156.40px;top:153.13px;font-size:10.60px;line-height:10.60px;color:#444444;transform:scaleX(0.9084);">Suplementos</span>
<div class="r" style="left:1227.30px;top:80.00px;width:1.00px;height:81.00px;background:#d4d4d4;"></div>
<svg class="r" style="left:1241px;top:81.6px" width="29" height="26.4" viewBox="0 0 29 26.4">
<defs>
<linearGradient id="cpA" x1="0.6" y1="0" x2="0.25" y2="1"><stop offset="0" stop-color="#1a62de"/><stop offset="0.28" stop-color="#1fa6e0"/><stop offset="0.5" stop-color="#3cc07a"/><stop offset="0.7" stop-color="#e8d23a"/><stop offset="0.88" stop-color="#f59a2e"/><stop offset="1" stop-color="#ee5a3a"/></linearGradient>
<linearGradient id="cpB" x1="0.75" y1="0" x2="0.25" y2="1"><stop offset="0" stop-color="#6f5cf2"/><stop offset="0.4" stop-color="#b450e6"/><stop offset="0.75" stop-color="#ee4f8e"/><stop offset="1" stop-color="#f5763c"/></linearGradient>
</defs>
<path d="M17.4 26 C21.2 26 23 24.2 24 21.2 L27.8 11.4 C29.2 7.4 27.4 4.4 23.6 3.6 C20.4 3 18.4 4.6 17.4 7.6 L12 21 C11 24 13.4 26 17.4 26 Z" fill="url(#cpB)"/>
<path d="M11.6 0.4 C7.8 0.4 6 2.2 5 5.2 L1.2 15 C-0.2 19 1.6 22 5.4 22.8 C8.6 23.4 10.6 21.8 11.6 18.8 L17 5.4 C18 2.4 15.6 0.4 11.6 0.4 Z" fill="url(#cpA)"/>
<path d="M11.6 0.4 H19.4 C22.2 0.4 23.8 1.8 24.4 4 C21.6 3 18.6 3.8 17.4 7.2 L17 5.4 C17.6 2.6 15.4 0.4 11.6 0.4Z" fill="#2a6ee6"/>
<path d="M17.4 26 H9.6 C6.8 26 5.2 24.6 4.6 22.4 C7.4 23.4 10.4 22.6 11.6 19.2 L12 21 C11.4 23.8 13.6 26 17.4 26Z" fill="#f0603e"/>
<path d="M16.6 9.4 L13.6 17.2 C13.2 18.2 12.4 17.6 12.8 16.6 L15.6 9 C16 8 17 8.4 16.6 9.4Z" fill="#fff" stroke="#fff" stroke-width="2.6" stroke-linejoin="round"/>
</svg>
<span class="t" style="left:1237.20px;top:114.40px;font-size:12.40px;line-height:12.40px;color:#363636;transform:scaleX(0.9586);">Copilot</span>
<div class="r" style="left:1283.30px;top:80.00px;width:1.00px;height:81.00px;background:#d4d4d4;"></div>
<svg class="r" style="left:1305.80px;top:83.20px;" width="28" height="28" viewBox="0 0 28 28">
<path d="M3 1.2 H14 L19.4 6.6 V15 M10 22.8 H3 C2.2 22.8 1.6 22.2 1.6 21.4 V2.6 C1.6 1.8 2.2 1.2 3 1.2" fill="none" stroke="#2a6fdb" stroke-width="1.25" stroke-linejoin="round"/>
<path d="M13.8 1.4 V6.8 H19.2" fill="none" stroke="#2a6fdb" stroke-width="1.15"/>
<path d="M6 15.6 C8 12.8 9.6 9.6 9.8 7.6 C9.9 6.4 8.6 6.4 8.7 7.8 C8.9 10.2 11.4 13.2 14 14 C15.2 14.3 15.2 13.2 13.8 13.2 C11.6 13.2 8 14.4 6.2 16 C5.2 16.9 5.4 16.4 6 15.6Z" fill="none" stroke="#2a6fdb" stroke-width="0.9"/>
<g fill="none" stroke="#2a6fdb" stroke-width="1.5" stroke-linecap="round">
<path d="M17.6 18.4 L19.8 16.2 C21.2 14.8 23.4 14.8 24.6 16 C25.8 17.2 25.8 19.2 24.4 20.6 L23 22"/>
<path d="M19.6 23 L17.4 25.2 C16 26.6 14 26.6 12.8 25.4 C11.6 24.2 11.6 22.2 13 20.8 L14.4 19.4"/>
<path d="M16.2 23.2 L21.2 18.2"/>
</g>
</svg>
<span class="t" style="left:1305.60px;top:114.40px;font-size:12.40px;line-height:12.40px;color:#363636;transform:scaleX(0.8885);">Crie</span>
<span class="t" style="left:1296.40px;top:129.00px;font-size:12.40px;line-height:12.40px;color:#363636;transform:scaleX(0.8489);">um PDF</span>
<span class="t" style="left:1287.40px;top:153.13px;font-size:10.60px;line-height:10.60px;color:#444444;transform:scaleX(0.9412);">Adobe Acr...</span>
<div class="r" style="left:1345.90px;top:80.00px;width:1.00px;height:81.00px;background:#d4d4d4;"></div>
<div class="r" style="left:1362.80px;top:80.20px;width:29.80px;height:29.40px;background:#2d2d2f;border-radius:50%;"></div>
<span class="t" style="left:1366.60px;top:88.13px;font-size:10.60px;line-height:10.60px;color:#ffffff;font-weight:700;transform:scaleX(1.0188);">GPT</span>
<div class="r" style="left:1369.40px;top:99.80px;width:3.20px;height:0.70px;background:#8a8a8a;"></div>
<div class="r" style="left:1382.80px;top:99.80px;width:3.20px;height:0.70px;background:#8a8a8a;"></div>
<div class="r" style="left:1374.60px;top:99.50px;width:6.20px;height:1.20px;background:#7a7a7a;"></div>
<span class="t" style="left:1356.60px;top:114.40px;font-size:12.40px;line-height:12.40px;color:#363636;transform:scaleX(0.8165);">ChatGPT</span>
<span class="t" style="left:1357.40px;top:129.00px;font-size:12.40px;line-height:12.40px;color:#363636;transform:scaleX(0.8707);">for Excel</span>
<span class="t" style="left:1374.20px;top:153.13px;font-size:10.60px;line-height:10.60px;color:#444444;transform:scaleX(0.6790);">AI</span>
<div class="r" style="left:1409.00px;top:80.00px;width:1.00px;height:81.00px;background:#d4d4d4;"></div>
<svg class="r" style="left:1419.10px;top:151.50px;" width="10.2" height="6.2" viewBox="0 0 10.2 6.2"><path d="M1 1 L5.1 5.2 L9.2 1" fill="none" stroke="#3a3a3a" stroke-width="1.2" stroke-linecap="round" stroke-linejoin="round"/></svg>
<div class="r" style="left:5.00px;top:175.80px;width:125.20px;height:21.00px;background:#ffffff;border-radius:4px;box-shadow:0 0 0 0.6px rgba(0,0,0,0.10);"></div>
<span class="t" style="left:9.80px;top:180.63px;font-size:12.60px;line-height:12.60px;color:#2a2a2a;transform:scaleX(0.8435);">X4</span>
<svg class="r" style="left:115.30px;top:184.40px;" width="10.2" height="6" viewBox="0 0 10.2 6"><path d="M1 1 L5.1 5 L9.2 1" fill="none" stroke="#3a3a3a" stroke-width="1.15" stroke-linecap="round" stroke-linejoin="round"/></svg>
<div class="r" style="left:139.60px;top:181.60px;width:2.00px;height:2.00px;background:#4a4a4a;border-radius:50%;"></div>
<div class="r" style="left:139.60px;top:185.50px;width:2.00px;height:2.00px;background:#4a4a4a;border-radius:50%;"></div>
<div class="r" style="left:139.60px;top:189.40px;width:2.00px;height:2.00px;background:#4a4a4a;border-radius:50%;"></div>
<div class="r" style="left:150.80px;top:175.80px;width:79.20px;height:21.00px;background:#ffffff;border-radius:4px;box-shadow:0 0 0 0.6px rgba(0,0,0,0.10);"></div>
<svg class="r" style="left:156.50px;top:181.00px;" width="11" height="11" viewBox="0 0 11 11"><path d="M1 1 L10 10 M10 1 L1 10" stroke="#b9b9b9" stroke-width="1.1" fill="none"/></svg>
<svg class="r" style="left:177.00px;top:181.00px;" width="14" height="11" viewBox="0 0 14 11"><path d="M1 6.4 L4.6 10 L13 1" stroke="#b9b9b9" stroke-width="1.1" fill="none"/></svg>
<span class="t" style="left:202.40px;top:178.08px;font-size:15.50px;line-height:15.50px;color:#333;font-style:italic;font-family:'Liberation Serif',serif;-webkit-text-stroke:0.35px #333;">f</span>
<span class="t" style="left:207.20px;top:180.56px;font-size:12.80px;line-height:12.80px;color:#333;font-style:italic;font-family:'Liberation Serif',serif;-webkit-text-stroke:0.35px #333;">x</span>
<svg class="r" style="left:218.80px;top:184.30px;" width="9.6" height="5.8" viewBox="0 0 9.6 5.8"><path d="M1 1 L4.8 4.8 L8.6 1" fill="none" stroke="#7a7a7a" stroke-width="1" stroke-linecap="round" stroke-linejoin="round"/></svg>
<div class="r" style="left:235.20px;top:175.80px;width:1202.00px;height:21.00px;background:#ffffff;border-radius:4px;box-shadow:0 0 0 0.6px rgba(0,0,0,0.10);"></div>
<span class="t" style="left:245.00px;top:180.63px;font-size:12.60px;line-height:12.60px;color:#2a2a2a;transform:scaleX(0.9578);">000010616</span>
<svg class="r" style="left:1423.40px;top:182.90px;" width="10.4" height="6.2" viewBox="0 0 10.4 6.2"><path d="M1 1 L5.2 5.2 L9.4 1" fill="none" stroke="#3a3a3a" stroke-width="1.15" stroke-linecap="round" stroke-linejoin="round"/></svg>
<div class="r" style="left:0.00px;top:203.00px;width:1425.40px;height:516.40px;background:#ffffff;"></div>
<div class="r" style="left:0.00px;top:203.40px;width:1425.40px;height:13.20px;background:#f0f0f0;"></div>
<div class="r" style="left:0.00px;top:216.20px;width:1425.40px;height:1.00px;background:#c6c6c6;"></div>
<svg class="r" style="left:6.00px;top:207.00px;" width="9" height="8" viewBox="0 0 9 8"><path d="M8 0.5 V7.4 H0.8 Z" fill="#d6d6d6"/></svg>
<span class="t" style="left:18.73px;top:204.90px;font-size:9.80px;line-height:9.80px;color:#4a4a4a;transform:scaleX(0.9400);">A</span>
<div class="r" style="left:25.50px;top:204.00px;width:1.00px;height:12.00px;background:#dcdcdc;"></div>
<span class="t" style="left:62.48px;top:204.90px;font-size:9.80px;line-height:9.80px;color:#4a4a4a;transform:scaleX(0.9400);">B</span>
<div class="r" style="left:104.00px;top:204.00px;width:1.00px;height:12.00px;background:#dcdcdc;"></div>
<span class="t" style="left:106.22px;top:204.90px;font-size:9.80px;line-height:9.80px;color:#4a4a4a;transform:scaleX(0.9400);">C</span>
<div class="r" style="left:113.50px;top:204.00px;width:1.00px;height:12.00px;background:#dcdcdc;"></div>
<span class="t" style="left:167.77px;top:204.90px;font-size:9.80px;line-height:9.80px;color:#4a4a4a;transform:scaleX(0.9400);">D</span>
<div class="r" style="left:227.10px;top:204.00px;width:1.00px;height:12.00px;background:#dcdcdc;"></div>
<span class="t" style="left:229.53px;top:204.90px;font-size:9.80px;line-height:9.80px;color:#4a4a4a;transform:scaleX(0.9400);">E</span>
<div class="r" style="left:236.50px;top:204.00px;width:1.00px;height:12.00px;background:#dcdcdc;"></div>
<span class="t" style="left:294.64px;top:204.90px;font-size:9.80px;line-height:9.80px;color:#4a4a4a;transform:scaleX(0.9400);">F</span>
<div class="r" style="left:356.80px;top:204.00px;width:1.00px;height:12.00px;background:#dcdcdc;"></div>
<span class="t" style="left:358.87px;top:204.90px;font-size:9.80px;line-height:9.80px;color:#4a4a4a;transform:scaleX(0.9400);">G</span>
<div class="r" style="left:366.50px;top:204.00px;width:1.00px;height:12.00px;background:#dcdcdc;"></div>
<span class="t" style="left:425.27px;top:204.90px;font-size:9.80px;line-height:9.80px;color:#4a4a4a;transform:scaleX(0.9400);">H</span>
<div class="r" style="left:489.10px;top:204.00px;width:1.00px;height:12.00px;background:#dcdcdc;"></div>
<span class="t" style="left:550.42px;top:204.90px;font-size:9.80px;line-height:9.80px;color:#4a4a4a;transform:scaleX(0.9400);">I</span>
<div class="r" style="left:612.70px;top:204.00px;width:1.00px;height:12.00px;background:#dcdcdc;"></div>
<span class="t" style="left:616.00px;top:204.90px;font-size:9.80px;line-height:9.80px;color:#4a4a4a;transform:scaleX(0.9400);">J</span>
<div class="r" style="left:622.30px;top:204.00px;width:1.00px;height:12.00px;background:#dcdcdc;"></div>
<span class="t" style="left:666.28px;top:204.90px;font-size:9.80px;line-height:9.80px;color:#4a4a4a;transform:scaleX(0.9400);">K</span>
<div class="r" style="left:714.80px;top:204.00px;width:1.00px;height:12.00px;background:#dcdcdc;"></div>
<span class="t" style="left:774.09px;top:204.90px;font-size:9.80px;line-height:9.80px;color:#4a4a4a;transform:scaleX(0.9400);">L</span>
<div class="r" style="left:836.90px;top:204.00px;width:1.00px;height:12.00px;background:#dcdcdc;"></div>
<span class="t" style="left:870.46px;top:204.90px;font-size:9.80px;line-height:9.80px;color:#4a4a4a;transform:scaleX(0.9400);">M</span>
<div class="r" style="left:910.10px;top:204.00px;width:1.00px;height:12.00px;background:#dcdcdc;"></div>
<span class="t" style="left:946.87px;top:204.90px;font-size:9.80px;line-height:9.80px;color:#4a4a4a;transform:scaleX(0.9400);">N</span>
<div class="r" style="left:988.70px;top:204.00px;width:1.00px;height:12.00px;background:#dcdcdc;"></div>
<span class="t" style="left:990.72px;top:204.90px;font-size:9.80px;line-height:9.80px;color:#4a4a4a;transform:scaleX(0.9400);">O</span>
<div class="r" style="left:998.30px;top:204.00px;width:1.00px;height:12.00px;background:#dcdcdc;"></div>
<span class="t" style="left:1075.73px;top:204.90px;font-size:9.80px;line-height:9.80px;color:#4a4a4a;transform:scaleX(0.9400);">P</span>
<div class="r" style="left:1157.70px;top:204.00px;width:1.00px;height:12.00px;background:#dcdcdc;"></div>
<span class="t" style="left:1217.22px;top:204.90px;font-size:9.80px;line-height:9.80px;color:#4a4a4a;transform:scaleX(0.9400);">Q</span>
<div class="r" style="left:1282.30px;top:204.00px;width:1.00px;height:12.00px;background:#dcdcdc;"></div>
<span class="t" style="left:1284.57px;top:204.90px;font-size:9.80px;line-height:9.80px;color:#4a4a4a;transform:scaleX(0.9400);">R</span>
<div class="r" style="left:1291.90px;top:204.00px;width:1.00px;height:12.00px;background:#dcdcdc;"></div>
<span class="t" style="left:1320.13px;top:204.90px;font-size:9.80px;line-height:9.80px;color:#4a4a4a;transform:scaleX(0.9400);">S</span>
<div class="r" style="left:1352.90px;top:204.00px;width:1.00px;height:12.00px;background:#dcdcdc;"></div>
<span class="t" style="left:1355.79px;top:204.90px;font-size:9.80px;line-height:9.80px;color:#4a4a4a;transform:scaleX(0.9400);">T</span>
<div class="r" style="left:1362.70px;top:204.00px;width:1.00px;height:12.00px;background:#dcdcdc;"></div>
<span class="t" style="left:1391.27px;top:204.90px;font-size:9.80px;line-height:9.80px;color:#4a4a4a;transform:scaleX(0.9400);">U</span>
<div class="r" style="left:1424.90px;top:204.00px;width:1.00px;height:12.00px;background:#dcdcdc;"></div>
<div class="r" style="left:0.00px;top:217.20px;width:16.60px;height:502.20px;background:#f0f0f0;"></div>
<div class="r" style="left:16.30px;top:217.20px;width:0.80px;height:502.20px;background:#d6d6d6;"></div>
<span class="t" style="left:4.50px;top:220.27px;font-size:9.60px;line-height:9.60px;color:#4a4a4a;transform:scaleX(0.9008);">1</span>
<div class="r" style="left:0.00px;top:230.10px;width:16.00px;height:0.90px;background:#fbfbfb;"></div>
<span class="t" style="left:4.50px;top:247.27px;font-size:9.60px;line-height:9.60px;color:#4a4a4a;transform:scaleX(0.9008);">2</span>
<div class="r" style="left:0.00px;top:257.10px;width:16.00px;height:0.90px;background:#fbfbfb;"></div>
<span class="t" style="left:4.50px;top:275.17px;font-size:9.60px;line-height:9.60px;color:#4a4a4a;transform:scaleX(0.9008);">3</span>
<div class="r" style="left:0.00px;top:285.00px;width:16.00px;height:0.90px;background:#fbfbfb;"></div>
<div class="r" style="left:0.00px;top:285.50px;width:16.60px;height:13.55px;background:#e1e1e1;"></div>
<div class="r" style="left:15.60px;top:285.50px;width:1.20px;height:13.55px;background:#1a7343;"></div>
<span class="t" style="left:4.50px;top:288.73px;font-size:9.60px;line-height:9.60px;color:#107c41;transform:scaleX(0.9008);">4</span>
<div class="r" style="left:0.00px;top:298.55px;width:16.00px;height:0.90px;background:#fbfbfb;"></div>
<span class="t" style="left:4.50px;top:302.28px;font-size:9.60px;line-height:9.60px;color:#4a4a4a;transform:scaleX(0.9008);">5</span>
<div class="r" style="left:0.00px;top:312.11px;width:16.00px;height:0.90px;background:#fbfbfb;"></div>
<span class="t" style="left:4.50px;top:315.83px;font-size:9.60px;line-height:9.60px;color:#4a4a4a;transform:scaleX(0.9008);">6</span>
<div class="r" style="left:0.00px;top:325.66px;width:16.00px;height:0.90px;background:#fbfbfb;"></div>
<span class="t" style="left:4.50px;top:329.39px;font-size:9.60px;line-height:9.60px;color:#4a4a4a;transform:scaleX(0.9008);">7</span>
<div class="r" style="left:0.00px;top:339.21px;width:16.00px;height:0.90px;background:#fbfbfb;"></div>
<span class="t" style="left:4.50px;top:342.94px;font-size:9.60px;line-height:9.60px;color:#4a4a4a;transform:scaleX(0.9008);">8</span>
<div class="r" style="left:0.00px;top:352.76px;width:16.00px;height:0.90px;background:#fbfbfb;"></div>
<span class="t" style="left:4.50px;top:356.49px;font-size:9.60px;line-height:9.60px;color:#4a4a4a;transform:scaleX(0.9008);">9</span>
<div class="r" style="left:0.00px;top:366.32px;width:16.00px;height:0.90px;background:#fbfbfb;"></div>
<span class="t" style="left:2.09px;top:370.04px;font-size:9.60px;line-height:9.60px;color:#4a4a4a;transform:scaleX(0.9008);">10</span>
<div class="r" style="left:0.00px;top:379.87px;width:16.00px;height:0.90px;background:#fbfbfb;"></div>
<span class="t" style="left:2.41px;top:383.60px;font-size:9.60px;line-height:9.60px;color:#4a4a4a;transform:scaleX(0.9008);">11</span>
<div class="r" style="left:0.00px;top:393.42px;width:16.00px;height:0.90px;background:#fbfbfb;"></div>
<span class="t" style="left:2.09px;top:397.15px;font-size:9.60px;line-height:9.60px;color:#4a4a4a;transform:scaleX(0.9008);">12</span>
<div class="r" style="left:0.00px;top:406.98px;width:16.00px;height:0.90px;background:#fbfbfb;"></div>
<span class="t" style="left:2.09px;top:410.70px;font-size:9.60px;line-height:9.60px;color:#4a4a4a;transform:scaleX(0.9008);">13</span>
<div class="r" style="left:0.00px;top:420.53px;width:16.00px;height:0.90px;background:#fbfbfb;"></div>
<span class="t" style="left:2.09px;top:424.26px;font-size:9.60px;line-height:9.60px;color:#4a4a4a;transform:scaleX(0.9008);">14</span>
<div class="r" style="left:0.00px;top:434.08px;width:16.00px;height:0.90px;background:#fbfbfb;"></div>
<span class="t" style="left:2.09px;top:437.81px;font-size:9.60px;line-height:9.60px;color:#4a4a4a;transform:scaleX(0.9008);">15</span>
<div class="r" style="left:0.00px;top:447.64px;width:16.00px;height:0.90px;background:#fbfbfb;"></div>
<span class="t" style="left:2.09px;top:451.36px;font-size:9.60px;line-height:9.60px;color:#4a4a4a;transform:scaleX(0.9008);">16</span>
<div class="r" style="left:0.00px;top:461.19px;width:16.00px;height:0.90px;background:#fbfbfb;"></div>
<span class="t" style="left:2.09px;top:464.92px;font-size:9.60px;line-height:9.60px;color:#4a4a4a;transform:scaleX(0.9008);">17</span>
<div class="r" style="left:0.00px;top:474.74px;width:16.00px;height:0.90px;background:#fbfbfb;"></div>
<span class="t" style="left:2.09px;top:478.47px;font-size:9.60px;line-height:9.60px;color:#4a4a4a;transform:scaleX(0.9008);">18</span>
<div class="r" style="left:0.00px;top:488.30px;width:16.00px;height:0.90px;background:#fbfbfb;"></div>
<span class="t" style="left:2.09px;top:492.02px;font-size:9.60px;line-height:9.60px;color:#4a4a4a;transform:scaleX(0.9008);">19</span>
<div class="r" style="left:0.00px;top:501.85px;width:16.00px;height:0.90px;background:#fbfbfb;"></div>
<span class="t" style="left:2.09px;top:505.57px;font-size:9.60px;line-height:9.60px;color:#4a4a4a;transform:scaleX(0.9008);">20</span>
<div class="r" style="left:0.00px;top:515.40px;width:16.00px;height:0.90px;background:#fbfbfb;"></div>
<span class="t" style="left:2.09px;top:519.13px;font-size:9.60px;line-height:9.60px;color:#4a4a4a;transform:scaleX(0.9008);">21</span>
<div class="r" style="left:0.00px;top:528.95px;width:16.00px;height:0.90px;background:#fbfbfb;"></div>
<span class="t" style="left:2.09px;top:532.68px;font-size:9.60px;line-height:9.60px;color:#4a4a4a;transform:scaleX(0.9008);">22</span>
<div class="r" style="left:0.00px;top:542.51px;width:16.00px;height:0.90px;background:#fbfbfb;"></div>
<span class="t" style="left:2.09px;top:546.23px;font-size:9.60px;line-height:9.60px;color:#4a4a4a;transform:scaleX(0.9008);">23</span>
<div class="r" style="left:0.00px;top:556.06px;width:16.00px;height:0.90px;background:#fbfbfb;"></div>
<span class="t" style="left:2.09px;top:559.79px;font-size:9.60px;line-height:9.60px;color:#4a4a4a;transform:scaleX(0.9008);">24</span>
<div class="r" style="left:0.00px;top:569.61px;width:16.00px;height:0.90px;background:#fbfbfb;"></div>
<span class="t" style="left:2.09px;top:573.34px;font-size:9.60px;line-height:9.60px;color:#4a4a4a;transform:scaleX(0.9008);">25</span>
<div class="r" style="left:0.00px;top:583.17px;width:16.00px;height:0.90px;background:#fbfbfb;"></div>
<span class="t" style="left:2.09px;top:586.89px;font-size:9.60px;line-height:9.60px;color:#4a4a4a;transform:scaleX(0.9008);">26</span>
<div class="r" style="left:0.00px;top:596.72px;width:16.00px;height:0.90px;background:#fbfbfb;"></div>
<span class="t" style="left:2.09px;top:600.45px;font-size:9.60px;line-height:9.60px;color:#4a4a4a;transform:scaleX(0.9008);">27</span>
<div class="r" style="left:0.00px;top:610.27px;width:16.00px;height:0.90px;background:#fbfbfb;"></div>
<span class="t" style="left:2.09px;top:614.00px;font-size:9.60px;line-height:9.60px;color:#4a4a4a;transform:scaleX(0.9008);">28</span>
<div class="r" style="left:0.00px;top:623.83px;width:16.00px;height:0.90px;background:#fbfbfb;"></div>
<span class="t" style="left:2.09px;top:627.55px;font-size:9.60px;line-height:9.60px;color:#4a4a4a;transform:scaleX(0.9008);">29</span>
<div class="r" style="left:0.00px;top:637.38px;width:16.00px;height:0.90px;background:#fbfbfb;"></div>
<span class="t" style="left:2.09px;top:641.10px;font-size:9.60px;line-height:9.60px;color:#4a4a4a;transform:scaleX(0.9008);">30</span>
<div class="r" style="left:0.00px;top:650.93px;width:16.00px;height:0.90px;background:#fbfbfb;"></div>
<span class="t" style="left:2.09px;top:654.66px;font-size:9.60px;line-height:9.60px;color:#4a4a4a;transform:scaleX(0.9008);">31</span>
<div class="r" style="left:0.00px;top:664.48px;width:16.00px;height:0.90px;background:#fbfbfb;"></div>
<span class="t" style="left:2.09px;top:668.21px;font-size:9.60px;line-height:9.60px;color:#4a4a4a;transform:scaleX(0.9008);">32</span>
<div class="r" style="left:0.00px;top:678.04px;width:16.00px;height:0.90px;background:#fbfbfb;"></div>
<span class="t" style="left:2.09px;top:681.76px;font-size:9.60px;line-height:9.60px;color:#4a4a4a;transform:scaleX(0.9008);">33</span>
<div class="r" style="left:0.00px;top:691.59px;width:16.00px;height:0.90px;background:#fbfbfb;"></div>
<span class="t" style="left:2.09px;top:695.32px;font-size:9.60px;line-height:9.60px;color:#4a4a4a;transform:scaleX(0.9008);">34</span>
<div class="r" style="left:0.00px;top:705.14px;width:16.00px;height:0.90px;background:#fbfbfb;"></div>
<span class="t" style="left:2.09px;top:708.87px;font-size:9.60px;line-height:9.60px;color:#4a4a4a;transform:scaleX(0.9008);">35</span>
<div class="r" style="left:0.00px;top:718.70px;width:16.00px;height:0.90px;background:#fbfbfb;"></div>
<span class="t" style="left:34.40px;top:226.66px;font-size:23.20px;line-height:23.20px;color:#0a0a0a;font-weight:700;transform:scaleX(0.9800);-webkit-text-stroke:0.7px #0a0a0a;text-shadow:0.6px 0.8px 1.2px rgba(0,0,0,0.35);">CADASTROS</span>
<div class="r" style="left:25.70px;top:257.60px;width:79.10px;height:27.50px;background:#000000;"></div>
<span class="t" style="left:49.55px;top:266.67px;font-size:10.20px;line-height:10.20px;color:#ffffff;font-weight:700;transform:scaleX(1.0074);">Status</span>
<div class="r" style="left:26.00px;top:285.10px;width:78.50px;height:40.66px;background:#f2f2f2;"></div>
<div class="r" style="left:25.50px;top:298.65px;width:79.50px;height:1px;background:repeating-linear-gradient(90deg,#626262 0 1px,#9e9e9e 1px 2px);"></div>
<div class="r" style="left:25.50px;top:312.21px;width:79.50px;height:1px;background:repeating-linear-gradient(90deg,#626262 0 1px,#9e9e9e 1px 2px);"></div>
<div class="r" style="left:25.50px;top:325.76px;width:79.50px;height:1px;background:repeating-linear-gradient(90deg,#626262 0 1px,#9e9e9e 1px 2px);"></div>
<div class="r" style="left:25.50px;top:285.10px;width:1px;height:41.66px;background:repeating-linear-gradient(180deg,#626262 0 1px,#9e9e9e 1px 2px);"></div>
<div class="r" style="left:104.00px;top:285.10px;width:1px;height:41.66px;background:repeating-linear-gradient(180deg,#626262 0 1px,#9e9e9e 1px 2px);"></div>
<svg class="r" style="left:102.00px;top:323.76px;" width="3" height="3" viewBox="0 0 3 3"><path d="M3 0 V3 H0 Z" fill="#1f3f8f"/></svg>
<span class="t" style="left:41.72px;top:288.07px;font-size:10.20px;line-height:10.20px;color:#1f1f1f;">Em aberto</span>
<span class="t" style="left:42.01px;top:301.62px;font-size:10.20px;line-height:10.20px;color:#1f1f1f;">Em atraso</span>
<span class="t" style="left:53.34px;top:315.17px;font-size:10.20px;line-height:10.20px;color:#1f1f1f;">Pago</span>
<div class="r" style="left:113.70px;top:257.60px;width:114.20px;height:27.50px;background:#000000;"></div>
<span class="t" style="left:116.35px;top:266.67px;font-size:10.20px;line-height:10.20px;color:#ffffff;font-weight:700;">Formas de pagamento</span>
<div class="r" style="left:113.50px;top:298.65px;width:114.60px;height:1px;background:repeating-linear-gradient(90deg,#626262 0 1px,#9e9e9e 1px 2px);"></div>
<div class="r" style="left:113.50px;top:312.21px;width:114.60px;height:1px;background:repeating-linear-gradient(90deg,#626262 0 1px,#9e9e9e 1px 2px);"></div>
<div class="r" style="left:113.50px;top:325.76px;width:114.60px;height:1px;background:repeating-linear-gradient(90deg,#626262 0 1px,#9e9e9e 1px 2px);"></div>
<div class="r" style="left:113.50px;top:339.31px;width:114.60px;height:1px;background:repeating-linear-gradient(90deg,#626262 0 1px,#9e9e9e 1px 2px);"></div>
<div class="r" style="left:113.50px;top:352.87px;width:114.60px;height:1px;background:repeating-linear-gradient(90deg,#626262 0 1px,#9e9e9e 1px 2px);"></div>
<div class="r" style="left:113.50px;top:285.10px;width:1px;height:68.76px;background:repeating-linear-gradient(180deg,#626262 0 1px,#9e9e9e 1px 2px);"></div>
<div class="r" style="left:227.10px;top:285.10px;width:1px;height:68.76px;background:repeating-linear-gradient(180deg,#626262 0 1px,#9e9e9e 1px 2px);"></div>
<svg class="r" style="left:225.10px;top:350.87px;" width="3" height="3" viewBox="0 0 3 3"><path d="M3 0 V3 H0 Z" fill="#1f3f8f"/></svg>
<span class="t" style="left:156.34px;top:288.07px;font-size:10.20px;line-height:10.20px;color:#1f1f1f;">Boleto</span>
<span class="t" style="left:139.81px;top:301.62px;font-size:10.20px;line-height:10.20px;color:#1f1f1f;">Transferência</span>
<span class="t" style="left:163.71px;top:315.17px;font-size:10.20px;line-height:10.20px;color:#1f1f1f;">Pix</span>
<span class="t" style="left:131.68px;top:328.72px;font-size:10.20px;line-height:10.20px;color:#1f1f1f;">Cartão de crédito</span>
<span class="t" style="left:133.09px;top:342.28px;font-size:10.20px;line-height:10.20px;color:#1f1f1f;">Cartão de debito</span>
<div class="r" style="left:236.70px;top:257.60px;width:120.90px;height:27.50px;background:#000000;"></div>
<span class="t" style="left:264.05px;top:266.67px;font-size:10.20px;line-height:10.20px;color:#ffffff;font-weight:700;transform:scaleX(0.9764);">Tipo de Conta</span>
<div class="r" style="left:236.50px;top:298.65px;width:121.30px;height:1px;background:repeating-linear-gradient(90deg,#626262 0 1px,#9e9e9e 1px 2px);"></div>
<div class="r" style="left:236.50px;top:312.21px;width:121.30px;height:1px;background:repeating-linear-gradient(90deg,#626262 0 1px,#9e9e9e 1px 2px);"></div>
<div class="r" style="left:236.50px;top:325.76px;width:121.30px;height:1px;background:repeating-linear-gradient(90deg,#626262 0 1px,#9e9e9e 1px 2px);"></div>
<div class="r" style="left:236.50px;top:339.31px;width:121.30px;height:1px;background:repeating-linear-gradient(90deg,#626262 0 1px,#9e9e9e 1px 2px);"></div>
<div class="r" style="left:236.50px;top:352.87px;width:121.30px;height:1px;background:repeating-linear-gradient(90deg,#626262 0 1px,#9e9e9e 1px 2px);"></div>
<div class="r" style="left:236.50px;top:366.42px;width:121.30px;height:1px;background:repeating-linear-gradient(90deg,#626262 0 1px,#9e9e9e 1px 2px);"></div>
<div class="r" style="left:236.50px;top:379.97px;width:121.30px;height:1px;background:repeating-linear-gradient(90deg,#626262 0 1px,#9e9e9e 1px 2px);"></div>
<div class="r" style="left:236.50px;top:393.52px;width:121.30px;height:1px;background:repeating-linear-gradient(90deg,#626262 0 1px,#9e9e9e 1px 2px);"></div>
<div class="r" style="left:236.50px;top:285.10px;width:1px;height:109.42px;background:repeating-linear-gradient(180deg,#626262 0 1px,#9e9e9e 1px 2px);"></div>
<div class="r" style="left:356.80px;top:285.10px;width:1px;height:109.42px;background:repeating-linear-gradient(180deg,#626262 0 1px,#9e9e9e 1px 2px);"></div>
<svg class="r" style="left:354.80px;top:391.52px;" width="3" height="3" viewBox="0 0 3 3"><path d="M3 0 V3 H0 Z" fill="#1f3f8f"/></svg>
<span class="t" style="left:251.78px;top:288.07px;font-size:10.20px;line-height:10.20px;color:#1f1f1f;">Vendas de produtos</span>
<span class="t" style="left:277.59px;top:301.62px;font-size:10.20px;line-height:10.20px;color:#1f1f1f;">Serviços</span>
<span class="t" style="left:251.23px;top:315.17px;font-size:10.20px;line-height:10.20px;color:#1f1f1f;">Receitas financeiras</span>
<span class="t" style="left:262.57px;top:328.72px;font-size:10.20px;line-height:10.20px;color:#1f1f1f;">Outras receitas</span>
<span class="t" style="left:243.86px;top:342.28px;font-size:10.20px;line-height:10.20px;color:#1f1f1f;">Despesa Administrativa</span>
<span class="t" style="left:247.54px;top:355.83px;font-size:10.20px;line-height:10.20px;color:#1f1f1f;">Despesa com Vendas</span>
<span class="t" style="left:244.71px;top:369.38px;font-size:10.20px;line-height:10.20px;color:#1f1f1f;">Custo com embalagem</span>
<span class="t" style="left:240.19px;top:382.94px;font-size:10.20px;line-height:10.20px;color:#1f1f1f;">Custo com matéria prima</span>
<div class="r" style="left:366.70px;top:257.60px;width:246.80px;height:27.50px;background:#000000;"></div>
<span class="t" style="left:413.10px;top:266.67px;font-size:10.20px;line-height:10.20px;color:#ffffff;font-weight:700;transform:scaleX(0.9753);">Banco</span>
<div class="r" style="left:489.10px;top:257.60px;width:1px;height:27.50px;background:repeating-linear-gradient(180deg,#8a8a8a 0 1px,#3a3a3a 1px 2px);"></div>
<span class="t" style="left:531.55px;top:266.67px;font-size:10.20px;line-height:10.20px;color:#ffffff;font-weight:700;transform:scaleX(1.0299);">Imagem</span>
<div class="r" style="left:366.50px;top:298.65px;width:247.20px;height:1px;background:repeating-linear-gradient(90deg,#626262 0 1px,#9e9e9e 1px 2px);"></div>
<div class="r" style="left:366.50px;top:312.21px;width:247.20px;height:1px;background:repeating-linear-gradient(90deg,#626262 0 1px,#9e9e9e 1px 2px);"></div>
<div class="r" style="left:366.50px;top:325.76px;width:247.20px;height:1px;background:repeating-linear-gradient(90deg,#626262 0 1px,#9e9e9e 1px 2px);"></div>
<div class="r" style="left:366.50px;top:339.31px;width:247.20px;height:1px;background:repeating-linear-gradient(90deg,#626262 0 1px,#9e9e9e 1px 2px);"></div>
<div class="r" style="left:366.50px;top:352.87px;width:247.20px;height:1px;background:repeating-linear-gradient(90deg,#626262 0 1px,#9e9e9e 1px 2px);"></div>
<div class="r" style="left:366.50px;top:366.42px;width:247.20px;height:1px;background:repeating-linear-gradient(90deg,#626262 0 1px,#9e9e9e 1px 2px);"></div>
<div class="r" style="left:366.50px;top:379.97px;width:247.20px;height:1px;background:repeating-linear-gradient(90deg,#626262 0 1px,#9e9e9e 1px 2px);"></div>
<div class="r" style="left:366.50px;top:393.52px;width:247.20px;height:1px;background:repeating-linear-gradient(90deg,#626262 0 1px,#9e9e9e 1px 2px);"></div>
<div class="r" style="left:366.50px;top:407.08px;width:247.20px;height:1px;background:repeating-linear-gradient(90deg,#626262 0 1px,#9e9e9e 1px 2px);"></div>
<div class="r" style="left:366.50px;top:420.63px;width:247.20px;height:1px;background:repeating-linear-gradient(90deg,#626262 0 1px,#9e9e9e 1px 2px);"></div>
<div class="r" style="left:366.50px;top:434.18px;width:247.20px;height:1px;background:repeating-linear-gradient(90deg,#626262 0 1px,#9e9e9e 1px 2px);"></div>
<div class="r" style="left:366.50px;top:447.74px;width:247.20px;height:1px;background:repeating-linear-gradient(90deg,#626262 0 1px,#9e9e9e 1px 2px);"></div>
<div class="r" style="left:366.50px;top:285.10px;width:1px;height:163.64px;background:repeating-linear-gradient(180deg,#626262 0 1px,#9e9e9e 1px 2px);"></div>
<div class="r" style="left:489.10px;top:285.10px;width:1px;height:163.64px;background:repeating-linear-gradient(180deg,#626262 0 1px,#9e9e9e 1px 2px);"></div>
<div class="r" style="left:612.70px;top:285.10px;width:1px;height:163.64px;background:repeating-linear-gradient(180deg,#626262 0 1px,#9e9e9e 1px 2px);"></div>
<svg class="r" style="left:610.70px;top:445.74px;" width="3" height="3" viewBox="0 0 3 3"><path d="M3 0 V3 H0 Z" fill="#1f3f8f"/></svg>
<span class="t" style="left:392.58px;top:288.07px;font-size:10.20px;line-height:10.20px;color:#1f1f1f;">Banco do Brasil</span>
<div class="r lk" style="left:491.00px;top:286.70px;width:119.40px;height:12.55px;"><span>www.site.com.br/wp-content/uploads/2024/12/Banco-do-Brasil.png</span></div>
<span class="t" style="left:384.64px;top:301.62px;font-size:10.20px;line-height:10.20px;color:#1f1f1f;">Banco do Nordeste</span>
<div class="r lk" style="left:491.00px;top:300.25px;width:119.40px;height:12.55px;"><span>www.site.com.br/wp-content/uploads/2024/12/banco-do-nordeste.png</span></div>
<span class="t" style="left:406.76px;top:315.17px;font-size:10.20px;line-height:10.20px;color:#1f1f1f;">Bradesco</span>
<div class="r lk" style="left:491.00px;top:313.81px;width:119.40px;height:12.55px;"><span>www.site.com.br/wp-content/uploads/2024/12/bradesco.png</span></div>
<span class="t" style="left:408.74px;top:328.72px;font-size:10.20px;line-height:10.20px;color:#1f1f1f;">C6 Bank</span>
<div class="r lk" style="left:491.00px;top:327.36px;width:119.40px;height:12.55px;"><span>www.site.com.br/wp-content/uploads/2024/12/C6-bank.png</span></div>
<span class="t" style="left:415.26px;top:342.28px;font-size:10.20px;line-height:10.20px;color:#1f1f1f;">Caixa</span>
<div class="r lk" style="left:491.00px;top:340.91px;width:119.40px;height:12.55px;"><span>www.site.com.br/wp-content/uploads/2024/12/caixa.png</span></div>
<span class="t" style="left:393.71px;top:355.83px;font-size:10.20px;line-height:10.20px;color:#1f1f1f;">Cooperativa 01</span>
<div class="r lk" style="left:491.00px;top:354.46px;width:119.40px;height:12.55px;"><span>www.site.com.br/wp-content/uploads/2024/12/cooperativa-2.png</span></div>
<span class="t" style="left:393.71px;top:369.38px;font-size:10.20px;line-height:10.20px;color:#1f1f1f;">Cooperativa 02</span>
<div class="r lk" style="left:491.00px;top:368.02px;width:119.40px;height:12.55px;"><span>www.site.com.br/wp-content/uploads/2024/12/Cooperativa.png</span></div>
<span class="t" style="left:402.22px;top:382.94px;font-size:10.20px;line-height:10.20px;color:#1f1f1f;">Banco Inter</span>
<div class="r lk" style="left:491.00px;top:381.57px;width:119.40px;height:12.55px;"><span>www.site.com.br/wp-content/uploads/2024/12/Inter.png</span></div>
<span class="t" style="left:403.92px;top:396.49px;font-size:10.20px;line-height:10.20px;color:#1f1f1f;">Banco Itaú</span>
<div class="r lk" style="left:491.00px;top:395.12px;width:119.40px;height:12.55px;"><span>www.site.com.br/wp-content/uploads/2024/12/itau.png</span></div>
<span class="t" style="left:410.72px;top:410.04px;font-size:10.20px;line-height:10.20px;color:#1f1f1f;">Nubank</span>
<div class="r lk" style="left:491.00px;top:408.68px;width:119.40px;height:12.55px;"><span>www.site.com.br/wp-content/uploads/2024/12/Nubank.png</span></div>
<span class="t" style="left:401.36px;top:423.60px;font-size:10.20px;line-height:10.20px;color:#1f1f1f;">Pag Seguro</span>
<div class="r lk" style="left:491.00px;top:422.23px;width:119.40px;height:12.55px;"><span>www.site.com.br/wp-content/uploads/2024/12/Pag-Seguro.png</span></div>
<span class="t" style="left:404.77px;top:437.15px;font-size:10.20px;line-height:10.20px;color:#1f1f1f;">Santander</span>
<div class="r lk" style="left:491.00px;top:435.78px;width:119.40px;height:12.55px;"><span>www.site.com.br/wp-content/uploads/2024/12/Santander.png</span></div>
<div class="r" style="left:622.50px;top:257.60px;width:367.00px;height:27.50px;background:#0070c0;"></div>
<span class="t" style="left:641.30px;top:266.67px;font-size:10.20px;line-height:10.20px;color:#ffffff;font-weight:700;transform:scaleX(0.9795);">Cod Cliente</span>
<div class="r" style="left:714.80px;top:257.60px;width:1px;height:27.50px;background:rgba(255,255,255,0.7);"></div>
<span class="t" style="left:742.65px;top:266.67px;font-size:10.20px;line-height:10.20px;color:#ffffff;font-weight:700;transform:scaleX(1.0341);">Nome Cliente</span>
<div class="r" style="left:836.90px;top:257.60px;width:1px;height:27.50px;background:rgba(255,255,255,0.7);"></div>
<span class="t" style="left:852.35px;top:266.67px;font-size:10.20px;line-height:10.20px;color:#ffffff;font-weight:700;transform:scaleX(1.0515);">Telefone</span>
<div class="r" style="left:910.10px;top:257.60px;width:1px;height:27.50px;background:rgba(255,255,255,0.7);"></div>
<span class="t" style="left:928.90px;top:266.67px;font-size:10.20px;line-height:10.20px;color:#ffffff;font-weight:700;transform:scaleX(1.0766);">N°Titulo</span>
<div class="r" style="left:622.30px;top:298.65px;width:367.40px;height:1px;background:repeating-linear-gradient(90deg,#626262 0 1px,#9e9e9e 1px 2px);"></div>
<div class="r" style="left:622.30px;top:312.21px;width:367.40px;height:1px;background:repeating-linear-gradient(90deg,#626262 0 1px,#9e9e9e 1px 2px);"></div>
<div class="r" style="left:622.30px;top:325.76px;width:367.40px;height:1px;background:repeating-linear-gradient(90deg,#626262 0 1px,#9e9e9e 1px 2px);"></div>
<div class="r" style="left:622.30px;top:339.31px;width:367.40px;height:1px;background:repeating-linear-gradient(90deg,#626262 0 1px,#9e9e9e 1px 2px);"></div>
<div class="r" style="left:622.30px;top:352.87px;width:367.40px;height:1px;background:repeating-linear-gradient(90deg,#626262 0 1px,#9e9e9e 1px 2px);"></div>
<div class="r" style="left:622.30px;top:285.10px;width:1px;height:68.76px;background:repeating-linear-gradient(180deg,#626262 0 1px,#9e9e9e 1px 2px);"></div>
<div class="r" style="left:714.80px;top:285.10px;width:1px;height:68.76px;background:repeating-linear-gradient(180deg,#626262 0 1px,#9e9e9e 1px 2px);"></div>
<div class="r" style="left:836.90px;top:285.10px;width:1px;height:68.76px;background:repeating-linear-gradient(180deg,#626262 0 1px,#9e9e9e 1px 2px);"></div>
<div class="r" style="left:910.10px;top:285.10px;width:1px;height:68.76px;background:repeating-linear-gradient(180deg,#626262 0 1px,#9e9e9e 1px 2px);"></div>
<div class="r" style="left:988.70px;top:285.10px;width:1px;height:68.76px;background:repeating-linear-gradient(180deg,#626262 0 1px,#9e9e9e 1px 2px);"></div>
<svg class="r" style="left:986.70px;top:350.87px;" width="3" height="3" viewBox="0 0 3 3"><path d="M3 0 V3 H0 Z" fill="#1f3f8f"/></svg>
<span class="t" style="left:653.50px;top:288.07px;font-size:10.20px;line-height:10.20px;color:#1f1f1f;transform:scaleX(0.9138);">000763</span>
<span class="t" style="left:723.15px;top:288.07px;font-size:10.20px;line-height:10.20px;color:#1f1f1f;transform:scaleX(0.8799);">NEREU ALTMAYER E CIA</span>
<span class="t" style="left:850.65px;top:288.07px;font-size:10.20px;line-height:10.20px;color:#1f1f1f;transform:scaleX(0.9148);">999994521</span>
<span class="t" style="left:926.55px;top:288.07px;font-size:10.20px;line-height:10.20px;color:#1f1f1f;transform:scaleX(0.9148);">000010616</span>
<span class="t" style="left:653.50px;top:301.62px;font-size:10.20px;line-height:10.20px;color:#1f1f1f;transform:scaleX(0.9138);">000932</span>
<span class="t" style="left:741.10px;top:301.62px;font-size:10.20px;line-height:10.20px;color:#1f1f1f;transform:scaleX(0.8577);">A LESSA JUNIOR</span>
<span class="t" style="left:850.65px;top:301.62px;font-size:10.20px;line-height:10.20px;color:#1f1f1f;transform:scaleX(0.9148);">999994524</span>
<span class="t" style="left:926.55px;top:301.62px;font-size:10.20px;line-height:10.20px;color:#1f1f1f;transform:scaleX(0.9148);">000002986</span>
<span class="t" style="left:653.50px;top:315.17px;font-size:10.20px;line-height:10.20px;color:#1f1f1f;transform:scaleX(0.9138);">000932</span>
<span class="t" style="left:741.10px;top:315.17px;font-size:10.20px;line-height:10.20px;color:#1f1f1f;transform:scaleX(0.8577);">A LESSA JUNIOR</span>
<span class="t" style="left:850.65px;top:315.17px;font-size:10.20px;line-height:10.20px;color:#1f1f1f;transform:scaleX(0.9148);">999994512</span>
<span class="t" style="left:926.55px;top:315.17px;font-size:10.20px;line-height:10.20px;color:#1f1f1f;transform:scaleX(0.9148);">000002993</span>
<span class="t" style="left:653.50px;top:328.72px;font-size:10.20px;line-height:10.20px;color:#1f1f1f;transform:scaleX(0.9138);">000906</span>
<span class="t" style="left:721.85px;top:328.72px;font-size:10.20px;line-height:10.20px;color:#1f1f1f;transform:scaleX(0.9144);">BM BIKE IMPORTADORA</span>
<span class="t" style="left:850.65px;top:328.72px;font-size:10.20px;line-height:10.20px;color:#1f1f1f;transform:scaleX(0.9148);">999991245</span>
<span class="t" style="left:926.55px;top:328.72px;font-size:10.20px;line-height:10.20px;color:#1f1f1f;transform:scaleX(0.9148);">000002984</span>
<div class="r" style="left:998.50px;top:257.60px;width:284.60px;height:27.50px;background:#000000;"></div>
<span class="t" style="left:1038.65px;top:266.67px;font-size:10.20px;line-height:10.20px;color:#ffffff;font-weight:700;transform:scaleX(0.9903);">Score do Cliente</span>
<div class="r" style="left:1157.70px;top:257.60px;width:1px;height:27.50px;background:repeating-linear-gradient(180deg,#8a8a8a 0 1px,#3a3a3a 1px 2px);"></div>
<span class="t" style="left:1193.90px;top:266.67px;font-size:10.20px;line-height:10.20px;color:#ffffff;font-weight:700;transform:scaleX(1.0204);">Pontuação</span>
<div class="r" style="left:998.30px;top:298.65px;width:285.00px;height:1px;background:repeating-linear-gradient(90deg,#626262 0 1px,#9e9e9e 1px 2px);"></div>
<div class="r" style="left:998.30px;top:312.21px;width:285.00px;height:1px;background:repeating-linear-gradient(90deg,#626262 0 1px,#9e9e9e 1px 2px);"></div>
<div class="r" style="left:998.30px;top:325.76px;width:285.00px;height:1px;background:repeating-linear-gradient(90deg,#626262 0 1px,#9e9e9e 1px 2px);"></div>
<div class="r" style="left:998.30px;top:339.31px;width:285.00px;height:1px;background:repeating-linear-gradient(90deg,#626262 0 1px,#9e9e9e 1px 2px);"></div>
<div class="r" style="left:998.30px;top:352.87px;width:285.00px;height:1px;background:repeating-linear-gradient(90deg,#626262 0 1px,#9e9e9e 1px 2px);"></div>
<div class="r" style="left:998.30px;top:366.42px;width:285.00px;height:1px;background:repeating-linear-gradient(90deg,#626262 0 1px,#9e9e9e 1px 2px);"></div>
<div class="r" style="left:998.30px;top:285.10px;width:1px;height:82.32px;background:repeating-linear-gradient(180deg,#626262 0 1px,#9e9e9e 1px 2px);"></div>
<div class="r" style="left:1157.70px;top:285.10px;width:1px;height:82.32px;background:repeating-linear-gradient(180deg,#626262 0 1px,#9e9e9e 1px 2px);"></div>
<div class="r" style="left:1282.30px;top:285.10px;width:1px;height:82.32px;background:repeating-linear-gradient(180deg,#626262 0 1px,#9e9e9e 1px 2px);"></div>
<svg class="r" style="left:1280.30px;top:364.42px;" width="3" height="3" viewBox="0 0 3 3"><path d="M3 0 V3 H0 Z" fill="#1f3f8f"/></svg>
<span class="t" style="left:1003.35px;top:288.07px;font-size:10.20px;line-height:10.20px;color:#1f1f1f;transform:scaleX(1.0079);">Pagamento antes do vencimento</span>
<span class="t" style="left:1215.35px;top:288.07px;font-size:10.20px;line-height:10.20px;color:#1f1f1f;transform:scaleX(0.9079);">10</span>
<span class="t" style="left:1002.50px;top:301.62px;font-size:10.20px;line-height:10.20px;color:#1f1f1f;">Pagamento no dia do vencimento</span>
<span class="t" style="left:1218.00px;top:301.62px;font-size:10.20px;line-height:10.20px;color:#1f1f1f;transform:scaleX(0.8815);">9</span>
<span class="t" style="left:1033.14px;top:315.17px;font-size:10.20px;line-height:10.20px;color:#1f1f1f;">Até 5 dias de atraso</span>
<span class="t" style="left:1218.00px;top:315.17px;font-size:10.20px;line-height:10.20px;color:#1f1f1f;transform:scaleX(0.8815);">7</span>
<span class="t" style="left:1022.93px;top:328.72px;font-size:10.20px;line-height:10.20px;color:#1f1f1f;">De 6 a 15 dias de atraso</span>
<span class="t" style="left:1218.00px;top:328.72px;font-size:10.20px;line-height:10.20px;color:#1f1f1f;transform:scaleX(0.8815);">5</span>
<span class="t" style="left:1020.10px;top:342.28px;font-size:10.20px;line-height:10.20px;color:#1f1f1f;">De 16 a 30 dias de atraso</span>
<span class="t" style="left:1218.00px;top:342.28px;font-size:10.20px;line-height:10.20px;color:#1f1f1f;transform:scaleX(0.8815);">3</span>
<span class="t" style="left:1020.10px;top:355.83px;font-size:10.20px;line-height:10.20px;color:#1f1f1f;">Mais de 30 dias de atraso</span>
<span class="t" style="left:1218.00px;top:355.83px;font-size:10.20px;line-height:10.20px;color:#1f1f1f;transform:scaleX(0.8815);">0</span>
<div class="r" style="left:1292.10px;top:257.60px;width:61.60px;height:27.50px;background:#000000;"></div>
<span class="t" style="left:1299.55px;top:266.67px;font-size:10.20px;line-height:10.20px;color:#ffffff;font-weight:700;transform:scaleX(0.9577);">Empresas</span>
<div class="r" style="left:1291.90px;top:298.65px;width:62.00px;height:1px;background:repeating-linear-gradient(90deg,#626262 0 1px,#9e9e9e 1px 2px);"></div>
<div class="r" style="left:1291.90px;top:312.21px;width:62.00px;height:1px;background:repeating-linear-gradient(90deg,#626262 0 1px,#9e9e9e 1px 2px);"></div>
<div class="r" style="left:1291.90px;top:325.76px;width:62.00px;height:1px;background:repeating-linear-gradient(90deg,#626262 0 1px,#9e9e9e 1px 2px);"></div>
<div class="r" style="left:1291.90px;top:285.10px;width:1px;height:41.66px;background:repeating-linear-gradient(180deg,#626262 0 1px,#9e9e9e 1px 2px);"></div>
<div class="r" style="left:1352.90px;top:285.10px;width:1px;height:41.66px;background:repeating-linear-gradient(180deg,#626262 0 1px,#9e9e9e 1px 2px);"></div>
<span class="t" style="left:1313.55px;top:288.07px;font-size:10.20px;line-height:10.20px;color:#1f1f1f;transform:scaleX(0.8686);">GTU</span>
<span class="t" style="left:1306.30px;top:301.62px;font-size:10.20px;line-height:10.20px;color:#1f1f1f;transform:scaleX(0.8613);">SKORPI</span>
<svg class="r" style="left:1350.90px;top:310.21px;" width="3" height="3" viewBox="0 0 3 3"><path d="M3 0 V3 H0 Z" fill="#1f3f8f"/></svg>
<div class="r" style="left:1362.90px;top:257.60px;width:64.80px;height:27.50px;background:#c00000;"></div>
<div class="r" style="left:1362.70px;top:298.65px;width:65.20px;height:1px;background:repeating-linear-gradient(90deg,#626262 0 1px,#9e9e9e 1px 2px);"></div>
<div class="r" style="left:1362.70px;top:312.21px;width:65.20px;height:1px;background:repeating-linear-gradient(90deg,#626262 0 1px,#9e9e9e 1px 2px);"></div>
<div class="r" style="left:1362.70px;top:325.76px;width:65.20px;height:1px;background:repeating-linear-gradient(90deg,#626262 0 1px,#9e9e9e 1px 2px);"></div>
<div class="r" style="left:1362.70px;top:339.31px;width:65.20px;height:1px;background:repeating-linear-gradient(90deg,#626262 0 1px,#9e9e9e 1px 2px);"></div>
<div class="r" style="left:1362.70px;top:352.87px;width:65.20px;height:1px;background:repeating-linear-gradient(90deg,#626262 0 1px,#9e9e9e 1px 2px);"></div>
<div class="r" style="left:1362.70px;top:285.10px;width:1px;height:68.76px;background:repeating-linear-gradient(180deg,#626262 0 1px,#9e9e9e 1px 2px);"></div>
<span class="t" style="left:1385.60px;top:259.57px;font-size:10.20px;line-height:10.20px;color:#fff;font-weight:700;transform:scaleX(0.8978);">Cod</span>
<span class="t" style="left:1365.80px;top:273.27px;font-size:10.20px;line-height:10.20px;color:#fff;font-weight:700;transform:scaleX(1.0052);">Fornecedor</span>
<span class="t" style="left:1378.75px;top:288.07px;font-size:10.20px;line-height:10.20px;color:#1f1f1f;transform:scaleX(0.9138);">000763</span>
<span class="t" style="left:1378.75px;top:301.62px;font-size:10.20px;line-height:10.20px;color:#1f1f1f;transform:scaleX(0.9138);">000932</span>
<span class="t" style="left:1378.75px;top:315.17px;font-size:10.20px;line-height:10.20px;color:#1f1f1f;transform:scaleX(0.9138);">000932</span>
<span class="t" style="left:1378.75px;top:328.72px;font-size:10.20px;line-height:10.20px;color:#1f1f1f;transform:scaleX(0.9138);">000906</span>
<div class="r" style="left:1425.40px;top:203.00px;width:2.40px;height:516.40px;background:#e8eceb;"></div>
<div class="r" style="left:1427.60px;top:204.00px;width:15.60px;height:516.00px;background:#f4f5f4;border-radius:7.8px;"></div>
<svg class="r" style="left:1431.10px;top:208.00px;" width="9" height="7" viewBox="0 0 9 7"><path d="M4.5 0.3 L8.9 6.5 H0.1 Z" fill="#6e6e6e"/></svg>
<div class="r" style="left:1431.40px;top:219.50px;width:8.40px;height:484.20px;background:#6e6e6e;border-radius:4.2px;"></div>
<svg class="r" style="left:1431.10px;top:709.80px;" width="9" height="7" viewBox="0 0 9 7"><path d="M4.5 6.7 L8.9 0.5 H0.1 Z" fill="#6e6e6e"/></svg>
<div class="r" style="left:0.00px;top:719.20px;width:1445.00px;height:29.60px;background:linear-gradient(90deg,#e8ebe9 0%,#e9eaea 35%,#e8ecee 60%,#e8eced 100%);"></div>
<div class="r" style="left:102.90px;top:719.20px;width:76.20px;height:25.20px;background:#ffffff;border-radius:0 0 4px 4px;"></div>
<div class="r" style="left:182.40px;top:725.00px;width:1.00px;height:17.40px;background:#d5d8d6;"></div>
<span class="t" style="left:111.00px;top:724.99px;font-size:13.60px;line-height:13.60px;color:#111;font-weight:700;transform:scaleX(0.9112);">Cadastros</span>
<div class="r" style="left:111.00px;top:741.10px;width:60.80px;height:1.60px;background:#107c41;border-radius:1px;"></div>
<svg class="r" style="left:19.80px;top:727.80px;" width="8" height="12" viewBox="0 0 8 12"><path d="M6.6 1.4 L1.6 5.6 L6.6 9.8" fill="none" stroke="#8a8f8c" stroke-width="1.2" stroke-linecap="round" stroke-linejoin="round"/></svg>
<svg class="r" style="left:50.60px;top:727.80px;" width="8" height="12" viewBox="0 0 8 12"><path d="M1.4 1.4 L6.4 5.6 L1.4 9.8" fill="none" stroke="#8a8f8c" stroke-width="1.2" stroke-linecap="round" stroke-linejoin="round"/></svg>
<span class="t" style="left:201.60px;top:728.14px;font-size:14.60px;line-height:14.60px;color:#424242;transform:scaleX(0.8740);">Lançamentos Contas a pagar</span>
<div class="r" style="left:383.60px;top:726.00px;width:1.00px;height:16.60px;background:#cfd3d1;"></div>
<span class="t" style="left:403.00px;top:728.14px;font-size:14.60px;line-height:14.60px;color:#424242;transform:scaleX(0.8626);">Lançamentos Contas a Receber</span>
<div class="r" style="left:599.00px;top:726.00px;width:1.00px;height:16.60px;background:#cfd3d1;"></div>
<svg class="r" style="left:637.50px;top:726.70px;" width="13" height="13" viewBox="0 0 13 13"><path d="M6.5 1 V12 M1 6.5 H12" stroke="#2e2e2e" stroke-width="1.2" fill="none"/></svg>
<div class="r" style="left:867.60px;top:729.60px;width:2.30px;height:2.30px;background:#2e2e2e;border-radius:50%;"></div>
<div class="r" style="left:867.60px;top:733.35px;width:2.30px;height:2.30px;background:#2e2e2e;border-radius:50%;"></div>
<div class="r" style="left:867.60px;top:737.10px;width:2.30px;height:2.30px;background:#2e2e2e;border-radius:50%;"></div>
<div class="r" style="left:884.00px;top:726.40px;width:543.60px;height:14.60px;background:#f4f5f4;border-radius:7.3px;"></div>
<svg class="r" style="left:888.40px;top:729.30px;" width="7" height="9" viewBox="0 0 7 9"><path d="M0.3 4.4 L6.6 0.2 V8.6 Z" fill="#6e6e6e"/></svg>
<div class="r" style="left:900.40px;top:729.30px;width:425.20px;height:8.50px;background:#6e6e6e;border-radius:4.25px;"></div>
<svg class="r" style="left:1416.40px;top:729.30px;" width="7" height="9" viewBox="0 0 7 9"><path d="M6.7 4.4 L0.4 0.2 V8.6 Z" fill="#6e6e6e"/></svg>
<div class="r" style="left:0.00px;top:748.80px;width:1445.00px;height:21.00px;background:#f4f4f4;"></div>
<div class="r" style="left:0.00px;top:769.30px;width:1445.00px;height:1.70px;background:#141a17;"></div>
<span class="t" style="left:7.80px;top:755.44px;font-size:9.40px;line-height:9.40px;color:#333;transform:scaleX(1.0327);">Pronto</span>
<svg class="r" style="left:56.00px;top:753.40px;" width="15" height="13" viewBox="0 0 15 13">
<rect x="0.6" y="0.6" width="13.4" height="11.4" rx="0.8" fill="none" stroke="#3a3a3a" stroke-width="1.1"/>
<path d="M0.6 3.4 H14 M2.6 5.6 H5 M2.6 7.8 H5" stroke="#3a3a3a" stroke-width="1"/>
<circle cx="9.6" cy="8.2" r="2.9" fill="#f3f3f3" stroke="#3a3a3a" stroke-width="1.1"/><circle cx="9.6" cy="8.2" r="1.1" fill="#3a3a3a"/>
</svg>
<svg class="r" style="left:86.00px;top:753.00px;" width="15" height="14" viewBox="0 0 15 14">
<circle cx="6.4" cy="2.2" r="1.5" fill="none" stroke="#3a3a3a" stroke-width="1"/>
<path d="M1.2 4.4 L5 5.6 H7.8 L11.6 4.4 M5 5.6 V8.6 L3.2 13 M7.8 5.6 V8.6 L9.6 13" fill="none" stroke="#3a3a3a" stroke-width="1" stroke-linecap="round" stroke-linejoin="round"/>
<path d="M9.4 8.8 L13.6 13 M13.6 8.8 L9.4 13" stroke="#3a3a3a" stroke-width="1.1"/>
</svg>
<span class="t" style="left:103.60px;top:755.03px;font-size:10.00px;line-height:10.00px;color:#1c1c1c;font-weight:700;transform:scaleX(0.9565);">Acessibilidade: investigar</span>
<svg class="r" style="left:1043.60px;top:753.60px;" width="15" height="13" viewBox="0 0 15 13">
<rect x="0.6" y="0.6" width="12.4" height="8.4" rx="0.8" fill="none" stroke="#3a3a3a" stroke-width="1.1"/>
<path d="M4 11.6 H7" stroke="#3a3a3a" stroke-width="1.1"/>
<circle cx="10.6" cy="9" r="3.1" fill="#f3f3f3" stroke="#3a3a3a" stroke-width="1.1"/><circle cx="10.6" cy="9" r="1.0" fill="#3a3a3a"/>
</svg>
<span class="t" style="left:1060.40px;top:755.27px;font-size:9.60px;line-height:9.60px;color:#333;transform:scaleX(1.0184);">Exibir Configurações</span>
<div class="r" style="left:1169.40px;top:749.60px;width:37.80px;height:19.80px;background:#dedede;"></div>
<svg class="r" style="left:1181.40px;top:753.40px;" width="13" height="13" viewBox="0 0 13 13"><rect x="0.6" y="0.6" width="11.8" height="11.8" fill="none" stroke="#3a3a3a" stroke-width="1.1"/><path d="M0.6 4.6 H12.4 M0.6 8.4 H12.4 M4.6 0.6 V12.4 M8.4 0.6 V12.4" stroke="#3a3a3a" stroke-width="1" fill="none"/></svg>
<svg class="r" style="left:1218.80px;top:753.40px;" width="14" height="13" viewBox="0 0 14 13"><rect x="0.6" y="0.6" width="12.6" height="11.6" rx="1.2" fill="none" stroke="#3a3a3a" stroke-width="1.1"/><rect x="3.4" y="3.2" width="7" height="6.6" fill="none" stroke="#3a3a3a" stroke-width="0.9"/><path d="M4.6 5.2 H9.2 M4.6 7.2 H9.2" stroke="#3a3a3a" stroke-width="0.8"/></svg>
<svg class="r" style="left:1256.40px;top:753.40px;" width="15" height="13" viewBox="0 0 15 13"><path d="M0.6 0.6 H13.6 V12.2 H0.6 Z" fill="none" stroke="#3a3a3a" stroke-width="1.1"/><path d="M4.4 0.6 V6.8 H9.2 V0.6 M6.8 0.6 V6.8" fill="none" stroke="#3a3a3a" stroke-width="1.1"/></svg>
<div class="r" style="left:1287.00px;top:759.00px;width:7.40px;height:1.10px;background:#3a3a3a;"></div>
<div class="r" style="left:1299.60px;top:759.30px;width:94.20px;height:1.00px;background:#8e8e8e;"></div>
<div class="r" style="left:1346.00px;top:756.60px;width:1.00px;height:6.40px;background:#6a6a6a;"></div>
<div class="r" style="left:1329.80px;top:754.60px;width:4.20px;height:10.20px;background:#5f5f5f;"></div>
<div class="r" style="left:1398.00px;top:759.00px;width:7.60px;height:1.10px;background:#3a3a3a;"></div>
<div class="r" style="left:1401.20px;top:755.80px;width:1.10px;height:7.60px;background:#3a3a3a;"></div>
<span class="t" style="left:1418.00px;top:755.64px;font-size:9.40px;line-height:9.40px;color:#333;transform:scaleX(0.9780);">70%</span>
</body></html>
